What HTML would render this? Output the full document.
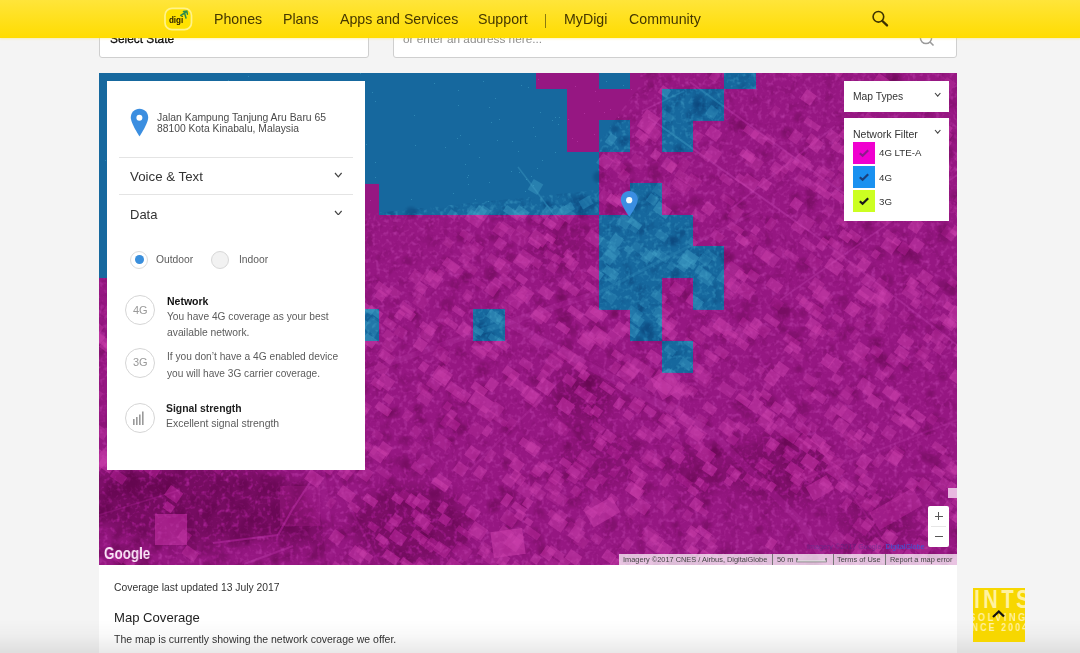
<!DOCTYPE html>
<html><head><meta charset="utf-8"><style>
*{margin:0;padding:0;box-sizing:border-box}
html,body{width:1080px;height:653px;overflow:hidden;background:#f4f4f4;font-family:"Liberation Sans",sans-serif;position:relative}
.abs{position:absolute}
.hdr{position:absolute;left:0;top:0;width:1080px;height:37.5px;background:linear-gradient(#ffe53a,#ffdc00);z-index:5;box-shadow:0 1px 2px rgba(255,230,60,0.35)}
.inp{position:absolute;top:20px;height:37.5px;background:#fff;border:1px solid #cfcfcf;border-radius:3px}
.map{position:absolute;left:99px;top:73px;width:858px;height:492px;overflow:hidden;background:#921883}
.panel{position:absolute;left:107px;top:81px;width:258px;height:389px;background:#fff;z-index:3}
.t{position:absolute;white-space:nowrap;line-height:1;will-change:transform}
.content{position:absolute;left:99px;top:565px;width:858px;height:88px;background:#fff}
</style></head><body>
<div class="inp" style="left:99px;width:270px"></div>
<div class="inp" style="left:393px;width:564px"></div>
<div class="t" style="left:110px;top:33.65px;font-size:11.9px;color:#000;font-weight:normal;-webkit-text-stroke:0.25px #000">Select State</div>
<div class="t" style="left:403px;top:33.50px;font-size:11.8px;color:#8c8c8c;font-weight:normal;">or enter an address here...</div>
<svg class="abs" style="left:916px;top:28px" width="22" height="22"><circle cx="10" cy="10" r="5.6" fill="none" stroke="#9a9a9a" stroke-width="1.5"/><line x1="14" y1="14" x2="17.5" y2="17.5" stroke="#9a9a9a" stroke-width="1.6"/></svg>
<div class="hdr"><div class="t" style="left:214.4px;top:12.00px;font-size:14.2px;color:#453700;font-weight:normal;">Phones</div>
<div class="t" style="left:283px;top:12.00px;font-size:14.2px;color:#453700;font-weight:normal;">Plans</div>
<div class="t" style="left:339.6px;top:12.00px;font-size:14.2px;color:#453700;font-weight:normal;">Apps and Services</div>
<div class="t" style="left:478.1px;top:12.00px;font-size:14.2px;color:#453700;font-weight:normal;">Support</div>
<div class="t" style="left:564.4px;top:12.00px;font-size:14.2px;color:#453700;font-weight:normal;">MyDigi</div>
<div class="t" style="left:628.6px;top:12.00px;font-size:14.2px;color:#453700;font-weight:normal;">Community</div>
<div class="abs" style="left:545.2px;top:13.5px;width:1px;height:14px;background:#8a7a10"></div>
<svg class="abs" style="left:868px;top:6px" width="24" height="24"><circle cx="10.4" cy="10.8" r="5.3" fill="none" stroke="#3d3300" stroke-width="1.6"/><line x1="14.4" y1="15" x2="19" y2="19.4" stroke="#3d3300" stroke-width="2.4" stroke-linecap="round"/></svg>
<svg class="abs" style="left:160px;top:3px" width="36" height="32">
<rect x="5" y="5.4" width="26.5" height="21.3" rx="7" fill="#ffe200" stroke="#fff38a" stroke-width="1.7"/>
<text x="8.9" y="20.5" font-family="Liberation Sans" font-weight="bold" font-size="8.8" fill="#2a2000" transform="translate(8.9 0) scale(0.92 1) translate(-8.9 0)">digi</text>
<path d="M20.8 12.5 L27 8.4 M23.5 8.6 L26.8 8.2 L27.4 11.2 M24.6 10.2 L26 15" stroke="#2f8c4c" stroke-width="1.5" fill="none" stroke-linecap="round"/>
</svg></div>
<div class="map"><svg class="abs" style="left:0;top:0" width="858" height="492" shape-rendering="crispEdges"><g fill="#16689e"><rect x="-2.7" y="-15.7" width="439.6" height="32.0"/>
<rect x="499.7" y="-15.7" width="31.4" height="32.0"/>
<rect x="625.3" y="-15.7" width="31.4" height="32.0"/>
<rect x="-2.7" y="15.8" width="471.0" height="32.0"/>
<rect x="562.5" y="15.8" width="62.8" height="32.0"/>
<rect x="-2.7" y="47.3" width="471.0" height="32.0"/>
<rect x="499.7" y="47.3" width="31.4" height="32.0"/>
<rect x="562.5" y="47.3" width="31.4" height="32.0"/>
<rect x="-2.7" y="78.8" width="502.4" height="32.0"/>
<rect x="-2.7" y="110.3" width="251.2" height="32.0"/>
<rect x="279.9" y="110.3" width="219.8" height="32.0"/>
<rect x="531.1" y="110.3" width="31.4" height="32.0"/>
<rect x="-2.7" y="141.8" width="251.2" height="32.0"/>
<rect x="499.7" y="141.8" width="94.2" height="32.0"/>
<rect x="-2.7" y="173.3" width="251.2" height="32.0"/>
<rect x="499.7" y="173.3" width="125.6" height="32.0"/>
<rect x="499.7" y="204.8" width="62.8" height="32.0"/>
<rect x="593.9" y="204.8" width="31.4" height="32.0"/>
<rect x="248.5" y="236.3" width="31.4" height="32.0"/>
<rect x="374.1" y="236.3" width="31.4" height="32.0"/>
<rect x="531.1" y="236.3" width="31.4" height="32.0"/>
<rect x="562.5" y="267.8" width="31.4" height="32.0"/></g></svg>
<svg class="abs" style="left:0;top:0;mix-blend-mode:soft-light" width="858" height="492"><defs><filter id="b1" x="-5%" y="-5%" width="110%" height="110%"><feGaussianBlur stdDeviation="1.6"/></filter><filter id="b3" x="-20%" y="-20%" width="140%" height="140%"><feGaussianBlur stdDeviation="8"/></filter><filter id="b2" x="-5%" y="-5%" width="110%" height="110%"><feGaussianBlur stdDeviation="0.6"/></filter><filter id="tl" x="0" y="0" width="100%" height="100%"><feTurbulence type="fractalNoise" baseFrequency="0.22" numOctaves="2" seed="4"/><feColorMatrix type="matrix" values="0 0 0 0 1  0 0 0 0 1  0 0 0 0 1  1.5 0 0 0 -0.75"/></filter><filter id="td" x="0" y="0" width="100%" height="100%"><feTurbulence type="fractalNoise" baseFrequency="0.08" numOctaves="3" seed="9"/><feColorMatrix type="matrix" values="0 0 0 0 0  0 0 0 0 0  0 0 0 0 0  -0.8 0 0 0 0.4"/></filter><clipPath id="land"><path d="M-10 -10 H868 V502 H-10 Z M-9 -23 L541 -23 L541 12 L501 67 L498 117 L401 127 L266 141 L266 205 L-9 205 Z" clip-rule="evenodd"/></clipPath></defs><g fill="#000" filter="url(#b3)"><ellipse cx="483" cy="323" rx="35" ry="28" fill-opacity="0.4"/><ellipse cx="683" cy="397" rx="55" ry="35" fill-opacity="0.4"/><ellipse cx="101" cy="432" rx="110" ry="40" fill-opacity="0.55"/><ellipse cx="201" cy="457" rx="30" ry="18" fill-opacity="0.45"/><ellipse cx="31" cy="407" rx="40" ry="15" fill-opacity="0.4"/><ellipse cx="311" cy="452" rx="60" ry="40" fill-opacity="0.45"/><ellipse cx="501" cy="387" rx="40" ry="30" fill-opacity="0.25"/><ellipse cx="781" cy="447" rx="40" ry="30" fill-opacity="0.3"/><ellipse cx="461" cy="172" rx="30" ry="20" fill-opacity="0.25"/><ellipse cx="601" cy="397" rx="30" ry="25" fill-opacity="0.3"/></g><g clip-path="url(#land)"><rect width="858" height="492" filter="url(#td)"/><rect width="858" height="492" filter="url(#tl)"/></g><g fill="#000" fill-opacity="0.3" filter="url(#b1)"><circle cx="552" cy="0" r="6"/><circle cx="612" cy="0" r="5"/><circle cx="792" cy="4" r="7"/><circle cx="780" cy="8" r="4"/><circle cx="796" cy="8" r="7"/><circle cx="552" cy="12" r="4"/><circle cx="600" cy="28" r="7"/><circle cx="616" cy="32" r="6"/><circle cx="568" cy="36" r="4"/><circle cx="600" cy="36" r="7"/><circle cx="760" cy="36" r="4"/><circle cx="700" cy="44" r="5"/><circle cx="636" cy="52" r="7"/><circle cx="644" cy="52" r="6"/><circle cx="516" cy="56" r="4"/><circle cx="816" cy="56" r="4"/><circle cx="840" cy="56" r="5"/><circle cx="556" cy="60" r="3"/><circle cx="688" cy="60" r="6"/><circle cx="828" cy="60" r="6"/><circle cx="852" cy="64" r="5"/><circle cx="524" cy="68" r="5"/><circle cx="748" cy="68" r="4"/><circle cx="816" cy="72" r="3"/><circle cx="580" cy="76" r="5"/><circle cx="816" cy="76" r="5"/><circle cx="704" cy="80" r="3"/><circle cx="848" cy="80" r="7"/><circle cx="580" cy="92" r="3"/><circle cx="528" cy="96" r="6"/><circle cx="524" cy="100" r="4"/><circle cx="556" cy="100" r="7"/><circle cx="684" cy="100" r="4"/><circle cx="760" cy="100" r="6"/><circle cx="500" cy="104" r="6"/><circle cx="652" cy="104" r="4"/><circle cx="776" cy="104" r="7"/><circle cx="824" cy="104" r="4"/><circle cx="836" cy="112" r="7"/><circle cx="712" cy="120" r="5"/><circle cx="516" cy="124" r="4"/><circle cx="552" cy="124" r="5"/><circle cx="696" cy="124" r="5"/><circle cx="792" cy="124" r="5"/><circle cx="860" cy="124" r="6"/><circle cx="476" cy="128" r="5"/><circle cx="484" cy="128" r="6"/><circle cx="548" cy="128" r="5"/><circle cx="596" cy="128" r="5"/><circle cx="632" cy="128" r="4"/><circle cx="712" cy="128" r="6"/><circle cx="448" cy="132" r="4"/><circle cx="492" cy="132" r="5"/><circle cx="536" cy="132" r="6"/><circle cx="640" cy="132" r="4"/><circle cx="644" cy="132" r="4"/><circle cx="748" cy="132" r="4"/><circle cx="780" cy="132" r="3"/><circle cx="480" cy="136" r="4"/><circle cx="512" cy="136" r="7"/><circle cx="524" cy="136" r="4"/><circle cx="576" cy="136" r="5"/><circle cx="712" cy="136" r="3"/><circle cx="312" cy="140" r="6"/><circle cx="484" cy="140" r="6"/><circle cx="812" cy="140" r="4"/><circle cx="628" cy="144" r="4"/><circle cx="648" cy="144" r="4"/><circle cx="792" cy="144" r="4"/><circle cx="808" cy="144" r="5"/><circle cx="840" cy="144" r="3"/><circle cx="432" cy="148" r="4"/><circle cx="464" cy="148" r="6"/><circle cx="668" cy="148" r="4"/><circle cx="464" cy="152" r="4"/><circle cx="768" cy="152" r="5"/><circle cx="400" cy="156" r="5"/><circle cx="488" cy="156" r="4"/><circle cx="844" cy="156" r="6"/><circle cx="584" cy="160" r="3"/><circle cx="644" cy="160" r="5"/><circle cx="796" cy="160" r="4"/><circle cx="360" cy="164" r="5"/><circle cx="396" cy="164" r="5"/><circle cx="752" cy="164" r="6"/><circle cx="844" cy="164" r="7"/><circle cx="572" cy="168" r="5"/><circle cx="576" cy="168" r="5"/><circle cx="668" cy="168" r="5"/><circle cx="728" cy="168" r="6"/><circle cx="760" cy="168" r="4"/><circle cx="412" cy="172" r="3"/><circle cx="456" cy="172" r="3"/><circle cx="756" cy="172" r="4"/><circle cx="444" cy="176" r="5"/><circle cx="796" cy="176" r="6"/><circle cx="804" cy="176" r="7"/><circle cx="780" cy="180" r="7"/><circle cx="808" cy="180" r="7"/><circle cx="412" cy="184" r="5"/><circle cx="460" cy="184" r="4"/><circle cx="608" cy="184" r="6"/><circle cx="628" cy="184" r="7"/><circle cx="816" cy="184" r="7"/><circle cx="308" cy="188" r="5"/><circle cx="348" cy="188" r="4"/><circle cx="804" cy="188" r="3"/><circle cx="664" cy="192" r="3"/><circle cx="704" cy="192" r="7"/><circle cx="464" cy="196" r="5"/><circle cx="648" cy="196" r="7"/><circle cx="336" cy="200" r="5"/><circle cx="392" cy="200" r="7"/><circle cx="576" cy="200" r="5"/><circle cx="656" cy="200" r="5"/><circle cx="368" cy="204" r="6"/><circle cx="96" cy="208" r="3"/><circle cx="168" cy="208" r="4"/><circle cx="532" cy="208" r="4"/><circle cx="788" cy="208" r="7"/><circle cx="820" cy="208" r="3"/><circle cx="356" cy="212" r="6"/><circle cx="408" cy="212" r="4"/><circle cx="572" cy="212" r="3"/><circle cx="576" cy="212" r="3"/><circle cx="844" cy="212" r="6"/><circle cx="856" cy="212" r="3"/><circle cx="88" cy="216" r="7"/><circle cx="200" cy="216" r="4"/><circle cx="852" cy="216" r="7"/><circle cx="64" cy="220" r="5"/><circle cx="176" cy="220" r="3"/><circle cx="192" cy="220" r="5"/><circle cx="240" cy="220" r="5"/><circle cx="396" cy="220" r="6"/><circle cx="464" cy="220" r="6"/><circle cx="588" cy="220" r="5"/><circle cx="24" cy="224" r="7"/><circle cx="460" cy="224" r="4"/><circle cx="480" cy="224" r="4"/><circle cx="584" cy="224" r="6"/><circle cx="128" cy="228" r="4"/><circle cx="184" cy="228" r="4"/><circle cx="260" cy="228" r="5"/><circle cx="440" cy="228" r="5"/><circle cx="464" cy="228" r="5"/><circle cx="744" cy="228" r="6"/><circle cx="16" cy="232" r="4"/><circle cx="348" cy="232" r="7"/><circle cx="496" cy="232" r="3"/><circle cx="568" cy="232" r="6"/><circle cx="648" cy="232" r="6"/><circle cx="676" cy="232" r="5"/><circle cx="140" cy="236" r="6"/><circle cx="460" cy="236" r="5"/><circle cx="540" cy="236" r="4"/><circle cx="684" cy="236" r="7"/><circle cx="720" cy="236" r="5"/><circle cx="304" cy="240" r="3"/><circle cx="516" cy="240" r="4"/><circle cx="684" cy="240" r="7"/><circle cx="704" cy="240" r="4"/><circle cx="212" cy="244" r="6"/><circle cx="292" cy="244" r="4"/><circle cx="316" cy="244" r="5"/><circle cx="468" cy="244" r="6"/><circle cx="644" cy="244" r="7"/><circle cx="812" cy="244" r="4"/><circle cx="20" cy="248" r="3"/><circle cx="44" cy="248" r="5"/><circle cx="460" cy="248" r="4"/><circle cx="40" cy="252" r="7"/><circle cx="92" cy="252" r="3"/><circle cx="496" cy="252" r="6"/><circle cx="64" cy="256" r="5"/><circle cx="92" cy="256" r="4"/><circle cx="100" cy="256" r="4"/><circle cx="384" cy="256" r="6"/><circle cx="472" cy="256" r="7"/><circle cx="504" cy="256" r="4"/><circle cx="548" cy="256" r="7"/><circle cx="684" cy="256" r="4"/><circle cx="704" cy="256" r="3"/><circle cx="720" cy="256" r="4"/><circle cx="752" cy="256" r="4"/><circle cx="840" cy="256" r="6"/><circle cx="156" cy="260" r="6"/><circle cx="384" cy="260" r="4"/><circle cx="664" cy="260" r="5"/><circle cx="228" cy="264" r="4"/><circle cx="392" cy="264" r="5"/><circle cx="552" cy="264" r="5"/><circle cx="592" cy="264" r="4"/><circle cx="624" cy="264" r="4"/><circle cx="696" cy="264" r="7"/><circle cx="744" cy="264" r="4"/><circle cx="836" cy="264" r="3"/><circle cx="144" cy="268" r="4"/><circle cx="540" cy="268" r="5"/><circle cx="652" cy="268" r="5"/><circle cx="780" cy="268" r="4"/><circle cx="340" cy="272" r="5"/><circle cx="468" cy="272" r="7"/><circle cx="776" cy="272" r="5"/><circle cx="0" cy="276" r="7"/><circle cx="24" cy="276" r="6"/><circle cx="272" cy="276" r="3"/><circle cx="16" cy="280" r="7"/><circle cx="44" cy="280" r="3"/><circle cx="200" cy="280" r="5"/><circle cx="240" cy="280" r="6"/><circle cx="320" cy="280" r="4"/><circle cx="360" cy="280" r="4"/><circle cx="512" cy="280" r="6"/><circle cx="820" cy="280" r="5"/><circle cx="208" cy="284" r="4"/><circle cx="464" cy="284" r="6"/><circle cx="600" cy="284" r="3"/><circle cx="624" cy="284" r="4"/><circle cx="780" cy="284" r="7"/><circle cx="132" cy="288" r="5"/><circle cx="260" cy="288" r="6"/><circle cx="544" cy="288" r="3"/><circle cx="784" cy="288" r="7"/><circle cx="284" cy="292" r="4"/><circle cx="296" cy="292" r="4"/><circle cx="344" cy="292" r="4"/><circle cx="488" cy="292" r="5"/><circle cx="524" cy="292" r="6"/><circle cx="808" cy="292" r="6"/><circle cx="20" cy="296" r="7"/><circle cx="120" cy="296" r="4"/><circle cx="128" cy="296" r="3"/><circle cx="384" cy="296" r="7"/><circle cx="448" cy="296" r="4"/><circle cx="700" cy="296" r="4"/><circle cx="44" cy="300" r="3"/><circle cx="416" cy="300" r="4"/><circle cx="556" cy="300" r="5"/><circle cx="36" cy="304" r="4"/><circle cx="408" cy="304" r="4"/><circle cx="764" cy="304" r="3"/><circle cx="792" cy="304" r="4"/><circle cx="844" cy="304" r="4"/><circle cx="164" cy="308" r="4"/><circle cx="196" cy="308" r="7"/><circle cx="436" cy="308" r="5"/><circle cx="488" cy="308" r="6"/><circle cx="492" cy="308" r="6"/><circle cx="64" cy="312" r="4"/><circle cx="72" cy="312" r="4"/><circle cx="184" cy="312" r="5"/><circle cx="276" cy="312" r="3"/><circle cx="476" cy="312" r="5"/><circle cx="76" cy="316" r="4"/><circle cx="264" cy="316" r="6"/><circle cx="328" cy="316" r="6"/><circle cx="384" cy="316" r="6"/><circle cx="488" cy="316" r="6"/><circle cx="712" cy="316" r="3"/><circle cx="236" cy="320" r="4"/><circle cx="352" cy="320" r="5"/><circle cx="736" cy="320" r="4"/><circle cx="756" cy="320" r="4"/><circle cx="832" cy="320" r="4"/><circle cx="120" cy="324" r="5"/><circle cx="460" cy="324" r="3"/><circle cx="552" cy="324" r="3"/><circle cx="568" cy="324" r="5"/><circle cx="664" cy="324" r="3"/><circle cx="776" cy="324" r="3"/><circle cx="96" cy="328" r="6"/><circle cx="364" cy="328" r="6"/><circle cx="528" cy="328" r="6"/><circle cx="672" cy="328" r="6"/><circle cx="348" cy="332" r="5"/><circle cx="540" cy="332" r="6"/><circle cx="640" cy="332" r="6"/><circle cx="672" cy="332" r="3"/><circle cx="104" cy="336" r="7"/><circle cx="320" cy="336" r="5"/><circle cx="356" cy="336" r="3"/><circle cx="704" cy="336" r="7"/><circle cx="288" cy="340" r="5"/><circle cx="296" cy="340" r="5"/><circle cx="648" cy="340" r="6"/><circle cx="180" cy="344" r="4"/><circle cx="560" cy="344" r="7"/><circle cx="836" cy="344" r="5"/><circle cx="76" cy="348" r="7"/><circle cx="184" cy="348" r="4"/><circle cx="244" cy="348" r="5"/><circle cx="324" cy="348" r="4"/><circle cx="344" cy="348" r="7"/><circle cx="356" cy="348" r="6"/><circle cx="656" cy="348" r="4"/><circle cx="252" cy="352" r="4"/><circle cx="288" cy="352" r="3"/><circle cx="608" cy="352" r="5"/><circle cx="360" cy="356" r="7"/><circle cx="408" cy="356" r="6"/><circle cx="480" cy="356" r="6"/><circle cx="828" cy="356" r="6"/><circle cx="192" cy="360" r="4"/><circle cx="252" cy="360" r="5"/><circle cx="260" cy="360" r="5"/><circle cx="704" cy="360" r="4"/><circle cx="112" cy="364" r="6"/><circle cx="288" cy="364" r="5"/><circle cx="480" cy="364" r="4"/><circle cx="636" cy="364" r="6"/><circle cx="56" cy="368" r="5"/><circle cx="164" cy="368" r="7"/><circle cx="308" cy="368" r="5"/><circle cx="352" cy="368" r="4"/><circle cx="424" cy="368" r="4"/><circle cx="684" cy="368" r="4"/><circle cx="688" cy="368" r="6"/><circle cx="692" cy="368" r="7"/><circle cx="712" cy="368" r="4"/><circle cx="44" cy="372" r="6"/><circle cx="468" cy="372" r="4"/><circle cx="536" cy="372" r="6"/><circle cx="588" cy="372" r="5"/><circle cx="184" cy="376" r="7"/><circle cx="220" cy="376" r="4"/><circle cx="284" cy="376" r="5"/><circle cx="432" cy="376" r="4"/><circle cx="576" cy="376" r="3"/><circle cx="616" cy="376" r="7"/><circle cx="636" cy="376" r="6"/><circle cx="684" cy="376" r="5"/><circle cx="216" cy="380" r="4"/><circle cx="616" cy="380" r="6"/><circle cx="800" cy="380" r="6"/><circle cx="284" cy="384" r="5"/><circle cx="376" cy="384" r="4"/><circle cx="828" cy="384" r="6"/><circle cx="44" cy="388" r="6"/><circle cx="232" cy="388" r="3"/><circle cx="260" cy="388" r="6"/><circle cx="304" cy="388" r="7"/><circle cx="548" cy="388" r="3"/><circle cx="612" cy="388" r="3"/><circle cx="688" cy="388" r="4"/><circle cx="836" cy="388" r="6"/><circle cx="-4" cy="392" r="3"/><circle cx="168" cy="392" r="6"/><circle cx="308" cy="392" r="5"/><circle cx="408" cy="392" r="5"/><circle cx="476" cy="392" r="5"/><circle cx="552" cy="392" r="5"/><circle cx="568" cy="392" r="7"/><circle cx="668" cy="392" r="4"/><circle cx="760" cy="392" r="5"/><circle cx="80" cy="396" r="6"/><circle cx="260" cy="396" r="4"/><circle cx="328" cy="396" r="4"/><circle cx="360" cy="396" r="5"/><circle cx="600" cy="396" r="5"/><circle cx="32" cy="400" r="5"/><circle cx="84" cy="400" r="3"/><circle cx="228" cy="400" r="6"/><circle cx="316" cy="400" r="4"/><circle cx="0" cy="404" r="4"/><circle cx="20" cy="404" r="5"/><circle cx="64" cy="404" r="3"/><circle cx="164" cy="404" r="3"/><circle cx="216" cy="404" r="4"/><circle cx="248" cy="404" r="7"/><circle cx="436" cy="404" r="6"/><circle cx="452" cy="404" r="7"/><circle cx="468" cy="404" r="6"/><circle cx="592" cy="404" r="6"/><circle cx="616" cy="404" r="7"/><circle cx="692" cy="404" r="6"/><circle cx="760" cy="404" r="5"/><circle cx="32" cy="408" r="7"/><circle cx="36" cy="408" r="6"/><circle cx="72" cy="408" r="6"/><circle cx="120" cy="408" r="5"/><circle cx="136" cy="408" r="3"/><circle cx="168" cy="408" r="7"/><circle cx="180" cy="408" r="6"/><circle cx="268" cy="408" r="4"/><circle cx="292" cy="408" r="5"/><circle cx="592" cy="408" r="4"/><circle cx="-4" cy="412" r="4"/><circle cx="12" cy="412" r="5"/><circle cx="64" cy="412" r="5"/><circle cx="72" cy="412" r="4"/><circle cx="80" cy="412" r="3"/><circle cx="144" cy="412" r="6"/><circle cx="204" cy="412" r="6"/><circle cx="552" cy="412" r="3"/><circle cx="676" cy="412" r="5"/><circle cx="820" cy="412" r="6"/><circle cx="28" cy="416" r="4"/><circle cx="56" cy="416" r="7"/><circle cx="68" cy="416" r="5"/><circle cx="116" cy="416" r="5"/><circle cx="128" cy="416" r="6"/><circle cx="164" cy="416" r="3"/><circle cx="176" cy="416" r="6"/><circle cx="196" cy="416" r="6"/><circle cx="200" cy="416" r="6"/><circle cx="404" cy="416" r="4"/><circle cx="544" cy="416" r="7"/><circle cx="16" cy="420" r="6"/><circle cx="36" cy="420" r="7"/><circle cx="68" cy="420" r="6"/><circle cx="336" cy="420" r="6"/><circle cx="-4" cy="424" r="7"/><circle cx="8" cy="424" r="5"/><circle cx="160" cy="424" r="3"/><circle cx="200" cy="424" r="6"/><circle cx="284" cy="424" r="6"/><circle cx="408" cy="424" r="7"/><circle cx="480" cy="424" r="4"/><circle cx="44" cy="428" r="5"/><circle cx="80" cy="428" r="4"/><circle cx="96" cy="428" r="5"/><circle cx="108" cy="428" r="4"/><circle cx="132" cy="428" r="5"/><circle cx="316" cy="428" r="7"/><circle cx="412" cy="428" r="4"/><circle cx="472" cy="428" r="5"/><circle cx="608" cy="428" r="5"/><circle cx="116" cy="432" r="4"/><circle cx="144" cy="432" r="6"/><circle cx="176" cy="432" r="4"/><circle cx="232" cy="432" r="3"/><circle cx="304" cy="432" r="4"/><circle cx="336" cy="432" r="5"/><circle cx="396" cy="432" r="7"/><circle cx="424" cy="432" r="5"/><circle cx="604" cy="432" r="6"/><circle cx="804" cy="432" r="3"/><circle cx="4" cy="436" r="6"/><circle cx="8" cy="436" r="7"/><circle cx="28" cy="436" r="4"/><circle cx="112" cy="436" r="6"/><circle cx="136" cy="436" r="4"/><circle cx="212" cy="436" r="4"/><circle cx="576" cy="436" r="3"/><circle cx="0" cy="440" r="4"/><circle cx="80" cy="440" r="7"/><circle cx="176" cy="440" r="6"/><circle cx="352" cy="440" r="5"/><circle cx="440" cy="440" r="5"/><circle cx="548" cy="440" r="4"/><circle cx="720" cy="440" r="5"/><circle cx="108" cy="444" r="5"/><circle cx="128" cy="444" r="5"/><circle cx="156" cy="444" r="7"/><circle cx="372" cy="444" r="5"/><circle cx="804" cy="444" r="3"/><circle cx="0" cy="448" r="6"/><circle cx="72" cy="448" r="4"/><circle cx="88" cy="448" r="7"/><circle cx="188" cy="448" r="6"/><circle cx="208" cy="448" r="5"/><circle cx="260" cy="448" r="4"/><circle cx="412" cy="448" r="7"/><circle cx="148" cy="452" r="7"/><circle cx="224" cy="452" r="5"/><circle cx="356" cy="452" r="6"/><circle cx="472" cy="452" r="6"/><circle cx="512" cy="452" r="7"/><circle cx="576" cy="452" r="4"/><circle cx="608" cy="452" r="5"/><circle cx="788" cy="452" r="4"/><circle cx="124" cy="456" r="3"/><circle cx="164" cy="456" r="7"/><circle cx="180" cy="456" r="4"/><circle cx="192" cy="456" r="6"/><circle cx="208" cy="456" r="3"/><circle cx="256" cy="456" r="4"/><circle cx="408" cy="456" r="5"/><circle cx="660" cy="456" r="5"/><circle cx="20" cy="460" r="5"/><circle cx="44" cy="460" r="5"/><circle cx="80" cy="460" r="3"/><circle cx="92" cy="460" r="6"/><circle cx="140" cy="460" r="6"/><circle cx="204" cy="460" r="6"/><circle cx="244" cy="460" r="6"/><circle cx="324" cy="460" r="5"/><circle cx="436" cy="460" r="6"/><circle cx="580" cy="460" r="4"/><circle cx="836" cy="460" r="3"/><circle cx="856" cy="460" r="5"/><circle cx="864" cy="460" r="7"/><circle cx="-4" cy="464" r="5"/><circle cx="16" cy="464" r="4"/><circle cx="64" cy="464" r="6"/><circle cx="148" cy="464" r="7"/><circle cx="328" cy="464" r="6"/><circle cx="-8" cy="468" r="7"/><circle cx="40" cy="468" r="4"/><circle cx="136" cy="468" r="7"/><circle cx="148" cy="468" r="4"/><circle cx="324" cy="468" r="3"/><circle cx="364" cy="468" r="5"/><circle cx="440" cy="468" r="3"/><circle cx="864" cy="468" r="7"/><circle cx="16" cy="472" r="5"/><circle cx="36" cy="472" r="7"/><circle cx="60" cy="472" r="5"/><circle cx="92" cy="472" r="7"/><circle cx="184" cy="472" r="4"/><circle cx="228" cy="472" r="7"/><circle cx="16" cy="476" r="5"/><circle cx="24" cy="476" r="6"/><circle cx="56" cy="476" r="5"/><circle cx="108" cy="476" r="7"/><circle cx="408" cy="476" r="5"/><circle cx="444" cy="476" r="6"/><circle cx="748" cy="476" r="5"/><circle cx="0" cy="480" r="4"/><circle cx="4" cy="480" r="5"/><circle cx="24" cy="480" r="4"/><circle cx="28" cy="480" r="3"/><circle cx="88" cy="480" r="4"/><circle cx="220" cy="480" r="7"/><circle cx="300" cy="480" r="4"/><circle cx="444" cy="480" r="4"/><circle cx="624" cy="480" r="5"/><circle cx="852" cy="480" r="3"/><circle cx="28" cy="484" r="3"/><circle cx="32" cy="484" r="6"/><circle cx="48" cy="484" r="5"/><circle cx="120" cy="484" r="7"/><circle cx="176" cy="484" r="6"/><circle cx="188" cy="484" r="5"/><circle cx="212" cy="484" r="5"/><circle cx="456" cy="484" r="4"/><circle cx="600" cy="484" r="7"/><circle cx="660" cy="484" r="6"/><circle cx="832" cy="484" r="6"/><circle cx="20" cy="488" r="6"/><circle cx="24" cy="488" r="5"/><circle cx="44" cy="488" r="7"/><circle cx="176" cy="488" r="3"/><circle cx="312" cy="488" r="4"/><circle cx="712" cy="488" r="7"/><circle cx="736" cy="488" r="4"/><circle cx="828" cy="488" r="4"/><circle cx="24" cy="492" r="4"/><circle cx="108" cy="492" r="5"/><circle cx="160" cy="492" r="5"/><circle cx="556" cy="492" r="3"/><circle cx="572" cy="492" r="6"/><circle cx="604" cy="492" r="5"/><circle cx="44" cy="496" r="6"/><circle cx="60" cy="496" r="3"/><circle cx="224" cy="496" r="5"/><circle cx="228" cy="496" r="5"/><circle cx="348" cy="496" r="3"/><circle cx="692" cy="496" r="3"/><circle cx="764" cy="496" r="3"/><circle cx="848" cy="496" r="7"/></g><g fill="#fff" fill-opacity="0.5"><rect x="57" y="-5" width="1" height="1"/><rect x="92" y="-7" width="1" height="1"/><rect x="394" y="-6" width="1" height="1"/><rect x="415" y="-6" width="1" height="1"/><rect x="371" y="-4" width="1" height="1"/><rect x="465" y="-3" width="1" height="1"/><rect x="477" y="-3" width="1" height="1"/><rect x="483" y="-2" width="1" height="1"/><rect x="487" y="-2" width="1" height="1"/><rect x="149" y="3" width="1" height="1"/><rect x="261" y="0" width="1" height="1"/><rect x="129" y="7" width="1" height="1"/><rect x="439" y="6" width="1" height="1"/><rect x="335" y="10" width="1" height="1"/><rect x="384" y="8" width="1" height="1"/><rect x="507" y="8" width="1" height="1"/><rect x="8" y="13" width="1" height="1"/><rect x="422" y="12" width="1" height="1"/><rect x="429" y="14" width="1" height="1"/><rect x="476" y="13" width="1" height="1"/><rect x="524" y="12" width="1" height="1"/><rect x="229" y="17" width="1" height="1"/><rect x="273" y="19" width="1" height="1"/><rect x="359" y="17" width="1" height="1"/><rect x="496" y="18" width="1" height="1"/><rect x="532" y="16" width="1" height="1"/><rect x="177" y="26" width="1" height="1"/><rect x="396" y="25" width="1" height="1"/><rect x="148" y="28" width="1" height="1"/><rect x="276" y="28" width="1" height="1"/><rect x="500" y="28" width="1" height="1"/><rect x="149" y="32" width="1" height="1"/><rect x="359" y="32" width="1" height="1"/><rect x="390" y="34" width="1" height="1"/><rect x="441" y="39" width="1" height="1"/><rect x="505" y="39" width="1" height="1"/><rect x="511" y="36" width="1" height="1"/><rect x="60" y="43" width="1" height="1"/><rect x="315" y="42" width="1" height="1"/><rect x="485" y="40" width="1" height="1"/><rect x="14" y="47" width="1" height="1"/><rect x="241" y="44" width="1" height="1"/><rect x="400" y="46" width="1" height="1"/><rect x="453" y="47" width="1" height="1"/><rect x="456" y="44" width="1" height="1"/><rect x="460" y="44" width="1" height="1"/><rect x="469" y="46" width="1" height="1"/><rect x="519" y="44" width="1" height="1"/><rect x="86" y="49" width="1" height="1"/><rect x="392" y="49" width="1" height="1"/><rect x="459" y="51" width="1" height="1"/><rect x="208" y="54" width="1" height="1"/><rect x="434" y="54" width="1" height="1"/><rect x="229" y="58" width="1" height="1"/><rect x="57" y="61" width="1" height="1"/><rect x="98" y="61" width="1" height="1"/><rect x="361" y="62" width="1" height="1"/><rect x="436" y="63" width="1" height="1"/><rect x="495" y="61" width="1" height="1"/><rect x="227" y="65" width="1" height="1"/><rect x="358" y="65" width="1" height="1"/><rect x="398" y="67" width="1" height="1"/><rect x="473" y="65" width="1" height="1"/><rect x="201" y="70" width="1" height="1"/><rect x="267" y="71" width="1" height="1"/><rect x="370" y="71" width="1" height="1"/><rect x="413" y="68" width="1" height="1"/><rect x="478" y="68" width="1" height="1"/><rect x="197" y="73" width="1" height="1"/><rect x="316" y="72" width="1" height="1"/><rect x="346" y="74" width="1" height="1"/><rect x="101" y="77" width="1" height="1"/><rect x="419" y="78" width="1" height="1"/><rect x="456" y="79" width="1" height="1"/><rect x="43" y="81" width="1" height="1"/><rect x="220" y="82" width="1" height="1"/><rect x="251" y="83" width="1" height="1"/><rect x="265" y="82" width="1" height="1"/><rect x="6" y="87" width="1" height="1"/><rect x="9" y="84" width="1" height="1"/><rect x="101" y="86" width="1" height="1"/><rect x="123" y="84" width="1" height="1"/><rect x="380" y="84" width="1" height="1"/><rect x="443" y="87" width="1" height="1"/><rect x="276" y="89" width="1" height="1"/><rect x="366" y="91" width="1" height="1"/><rect x="438" y="95" width="1" height="1"/><rect x="412" y="98" width="1" height="1"/><rect x="420" y="99" width="1" height="1"/><rect x="214" y="102" width="1" height="1"/><rect x="369" y="102" width="1" height="1"/><rect x="432" y="103" width="1" height="1"/><rect x="20" y="107" width="1" height="1"/><rect x="33" y="106" width="1" height="1"/><rect x="47" y="104" width="1" height="1"/><rect x="276" y="104" width="1" height="1"/><rect x="368" y="104" width="1" height="1"/><rect x="427" y="106" width="1" height="1"/><rect x="128" y="109" width="1" height="1"/><rect x="369" y="111" width="1" height="1"/><rect x="390" y="109" width="1" height="1"/><rect x="434" y="112" width="1" height="1"/><rect x="426" y="118" width="1" height="1"/><rect x="62" y="122" width="1" height="1"/><rect x="354" y="120" width="1" height="1"/><rect x="42" y="127" width="1" height="1"/><rect x="126" y="126" width="1" height="1"/><rect x="131" y="126" width="1" height="1"/><rect x="237" y="126" width="1" height="1"/><rect x="271" y="127" width="1" height="1"/><rect x="312" y="126" width="1" height="1"/><rect x="376" y="126" width="1" height="1"/><rect x="61" y="130" width="1" height="1"/><rect x="163" y="131" width="1" height="1"/><rect x="389" y="128" width="1" height="1"/><rect x="114" y="141" width="1" height="1"/><rect x="231" y="155" width="1" height="1"/><rect x="246" y="153" width="1" height="1"/><rect x="73" y="160" width="1" height="1"/><rect x="203" y="168" width="1" height="1"/><rect x="257" y="173" width="1" height="1"/><rect x="183" y="180" width="1" height="1"/><rect x="186" y="182" width="1" height="1"/><rect x="-8" y="191" width="1" height="1"/><rect x="188" y="189" width="1" height="1"/><rect x="87" y="192" width="1" height="1"/><rect x="94" y="194" width="1" height="1"/><rect x="246" y="196" width="1" height="1"/><rect x="203" y="202" width="1" height="1"/><rect x="212" y="202" width="1" height="1"/><rect x="232" y="201" width="1" height="1"/><rect x="83" y="206" width="1" height="1"/></g><g stroke="#fff" filter="url(#b2)"><line x1="549" y1="44" x2="713" y2="160" stroke-width="2" stroke-opacity="0.4"/><line x1="591" y1="9" x2="761" y2="132" stroke-width="2" stroke-opacity="0.35"/><line x1="632" y1="136" x2="736" y2="53" stroke-width="1.6" stroke-opacity="0.3"/><line x1="543" y1="38" x2="585" y2="18" stroke-width="1.5" stroke-opacity="0.3"/><line x1="681" y1="227" x2="858" y2="102" stroke-width="1.6" stroke-opacity="0.3"/><line x1="713" y1="160" x2="858" y2="272" stroke-width="1.8" stroke-opacity="0.3"/><line x1="266" y1="299" x2="371" y2="262" stroke-width="6" stroke-opacity="0.2"/><line x1="371" y1="262" x2="501" y2="219" stroke-width="6" stroke-opacity="0.2"/><line x1="501" y1="219" x2="661" y2="137" stroke-width="3" stroke-opacity="0.2"/><line x1="399" y1="244" x2="514" y2="306" stroke-width="8" stroke-opacity="0.22"/><line x1="514" y1="306" x2="612" y2="359" stroke-width="8" stroke-opacity="0.22"/><line x1="612" y1="359" x2="701" y2="448" stroke-width="7" stroke-opacity="0.2"/><line x1="701" y1="448" x2="728" y2="492" stroke-width="7" stroke-opacity="0.2"/><line x1="661" y1="287" x2="801" y2="492" stroke-width="1.8" stroke-opacity="0.2"/><line x1="212" y1="408" x2="193" y2="437" stroke-width="2" stroke-opacity="0.4"/><line x1="193" y1="437" x2="179" y2="462" stroke-width="2" stroke-opacity="0.4"/><line x1="179" y1="462" x2="114" y2="470" stroke-width="2" stroke-opacity="0.4"/><line x1="145" y1="491" x2="194" y2="473" stroke-width="2" stroke-opacity="0.35"/><line x1="0" y1="442" x2="81" y2="417" stroke-width="1.5" stroke-opacity="0.2"/><line x1="221" y1="397" x2="233" y2="492" stroke-width="10" stroke-opacity="0.12"/><line x1="701" y1="407" x2="858" y2="347" stroke-width="2" stroke-opacity="0.2"/><line x1="371" y1="397" x2="461" y2="307" stroke-width="2" stroke-opacity="0.2"/><line x1="231" y1="397" x2="281" y2="492" stroke-width="2" stroke-opacity="0.18"/><line x1="419" y1="94" x2="459" y2="147" stroke-width="1.4" stroke-opacity="0.35"/></g><g fill="#fff" filter="url(#b2)"><g id="bldg"><rect x="56" y="441" width="32" height="31" transform="rotate(0 72.0 456.5)" fill-opacity="0.45"/><rect x="181" y="413" width="40" height="40" transform="rotate(0 201.0 433.0)" fill-opacity="0.15"/><rect x="393" y="457" width="32" height="26" transform="rotate(-8 409.0 470.0)" fill-opacity="0.5"/><rect x="371" y="322" width="22" height="14" transform="rotate(35 382.0 329.0)" fill-opacity="0.45"/><rect x="709" y="407" width="24" height="16" transform="rotate(-30 721.0 415.0)" fill-opacity="0.4"/><rect x="431" y="108" width="11" height="12" transform="rotate(30 436.5 114.0)" fill-opacity="0.4"/><rect x="488" y="430" width="31" height="18" transform="rotate(-30 503.5 439.0)" fill-opacity="0.45"/><rect x="772" y="426" width="50" height="20" transform="rotate(-30 797.0 436.0)" fill-opacity="0.3"/><rect x="556" y="299" width="22" height="24" transform="rotate(-30 567.0 311.0)" fill-opacity="0.4"/><rect x="461" y="132" width="14" height="8" transform="rotate(-30 468.0 136.0)" fill-opacity="0.35"/><rect x="481" y="125" width="12" height="9" transform="rotate(-30 487.0 129.5)" fill-opacity="0.35"/><rect x="416" y="139" width="10" height="7" transform="rotate(-30 421.0 142.5)" fill-opacity="0.3"/><rect x="692" y="-8" width="11" height="8" transform="rotate(35 692 -8)" fill-opacity="0.29"/><rect x="740" y="-8" width="8" height="10" transform="rotate(35 740 -8)" fill-opacity="0.35"/><rect x="616" y="-4" width="8" height="11" transform="rotate(35 616 -4)" fill-opacity="0.29"/><rect x="780" y="0" width="13" height="11" transform="rotate(35 780 0)" fill-opacity="0.38"/><rect x="848" y="4" width="11" height="9" transform="rotate(35 848 4)" fill-opacity="0.23"/><rect x="564" y="12" width="10" height="9" transform="rotate(35 564 12)" fill-opacity="0.43"/><rect x="708" y="16" width="12" height="12" transform="rotate(35 708 16)" fill-opacity="0.44"/><rect x="764" y="20" width="10" height="9" transform="rotate(35 764 20)" fill-opacity="0.20"/><rect x="612" y="32" width="10" height="10" transform="rotate(35 612 32)" fill-opacity="0.31"/><rect x="676" y="32" width="7" height="11" transform="rotate(35 676 32)" fill-opacity="0.19"/><rect x="548" y="36" width="16" height="9" transform="rotate(35 548 36)" fill-opacity="0.43"/><rect x="564" y="36" width="14" height="7" transform="rotate(35 564 36)" fill-opacity="0.22"/><rect x="768" y="40" width="14" height="10" transform="rotate(35 768 40)" fill-opacity="0.27"/><rect x="544" y="44" width="15" height="11" transform="rotate(35 544 44)" fill-opacity="0.44"/><rect x="708" y="44" width="17" height="6" transform="rotate(35 708 44)" fill-opacity="0.37"/><rect x="552" y="48" width="14" height="13" transform="rotate(35 552 48)" fill-opacity="0.19"/><rect x="784" y="48" width="8" height="6" transform="rotate(35 784 48)" fill-opacity="0.25"/><rect x="844" y="48" width="12" height="13" transform="rotate(35 844 48)" fill-opacity="0.42"/><rect x="552" y="52" width="14" height="12" transform="rotate(35 552 52)" fill-opacity="0.26"/><rect x="612" y="52" width="14" height="11" transform="rotate(35 612 52)" fill-opacity="0.40"/><rect x="648" y="52" width="15" height="7" transform="rotate(35 648 52)" fill-opacity="0.40"/><rect x="748" y="52" width="10" height="9" transform="rotate(35 748 52)" fill-opacity="0.32"/><rect x="840" y="52" width="17" height="9" transform="rotate(35 840 52)" fill-opacity="0.34"/><rect x="540" y="56" width="12" height="8" transform="rotate(35 540 56)" fill-opacity="0.45"/><rect x="596" y="56" width="11" height="10" transform="rotate(35 596 56)" fill-opacity="0.27"/><rect x="656" y="56" width="16" height="9" transform="rotate(35 656 56)" fill-opacity="0.35"/><rect x="696" y="56" width="10" height="12" transform="rotate(35 696 56)" fill-opacity="0.34"/><rect x="732" y="56" width="13" height="10" transform="rotate(35 732 56)" fill-opacity="0.30"/><rect x="744" y="56" width="13" height="8" transform="rotate(35 744 56)" fill-opacity="0.42"/><rect x="752" y="56" width="11" height="7" transform="rotate(35 752 56)" fill-opacity="0.39"/><rect x="784" y="56" width="14" height="12" transform="rotate(35 784 56)" fill-opacity="0.44"/><rect x="800" y="56" width="14" height="12" transform="rotate(35 800 56)" fill-opacity="0.35"/><rect x="512" y="60" width="8" height="11" transform="rotate(35 512 60)" fill-opacity="0.41"/><rect x="544" y="60" width="8" height="11" transform="rotate(35 544 60)" fill-opacity="0.29"/><rect x="668" y="60" width="12" height="7" transform="rotate(35 668 60)" fill-opacity="0.28"/><rect x="712" y="60" width="10" height="10" transform="rotate(35 712 60)" fill-opacity="0.31"/><rect x="788" y="60" width="13" height="10" transform="rotate(35 788 60)" fill-opacity="0.36"/><rect x="840" y="60" width="16" height="7" transform="rotate(35 840 60)" fill-opacity="0.38"/><rect x="716" y="64" width="11" height="12" transform="rotate(35 716 64)" fill-opacity="0.44"/><rect x="736" y="68" width="10" height="8" transform="rotate(35 736 68)" fill-opacity="0.38"/><rect x="820" y="68" width="14" height="8" transform="rotate(35 820 68)" fill-opacity="0.43"/><rect x="612" y="72" width="14" height="13" transform="rotate(35 612 72)" fill-opacity="0.36"/><rect x="744" y="72" width="11" height="8" transform="rotate(35 744 72)" fill-opacity="0.34"/><rect x="764" y="72" width="17" height="13" transform="rotate(35 764 72)" fill-opacity="0.29"/><rect x="804" y="72" width="16" height="6" transform="rotate(35 804 72)" fill-opacity="0.25"/><rect x="512" y="76" width="14" height="9" transform="rotate(35 512 76)" fill-opacity="0.24"/><rect x="556" y="76" width="8" height="9" transform="rotate(35 556 76)" fill-opacity="0.43"/><rect x="604" y="76" width="12" height="8" transform="rotate(35 604 76)" fill-opacity="0.22"/><rect x="644" y="76" width="16" height="7" transform="rotate(35 644 76)" fill-opacity="0.44"/><rect x="648" y="76" width="10" height="9" transform="rotate(35 648 76)" fill-opacity="0.42"/><rect x="684" y="76" width="13" height="10" transform="rotate(35 684 76)" fill-opacity="0.29"/><rect x="784" y="76" width="14" height="9" transform="rotate(35 784 76)" fill-opacity="0.35"/><rect x="860" y="76" width="11" height="7" transform="rotate(35 860 76)" fill-opacity="0.30"/><rect x="504" y="80" width="13" height="12" transform="rotate(35 504 80)" fill-opacity="0.34"/><rect x="536" y="80" width="15" height="11" transform="rotate(35 536 80)" fill-opacity="0.18"/><rect x="652" y="80" width="16" height="12" transform="rotate(35 652 80)" fill-opacity="0.25"/><rect x="700" y="80" width="15" height="12" transform="rotate(35 700 80)" fill-opacity="0.39"/><rect x="860" y="80" width="14" height="8" transform="rotate(35 860 80)" fill-opacity="0.34"/><rect x="516" y="84" width="8" height="11" transform="rotate(35 516 84)" fill-opacity="0.26"/><rect x="568" y="84" width="13" height="11" transform="rotate(35 568 84)" fill-opacity="0.36"/><rect x="584" y="84" width="10" height="12" transform="rotate(35 584 84)" fill-opacity="0.21"/><rect x="692" y="84" width="10" height="12" transform="rotate(35 692 84)" fill-opacity="0.34"/><rect x="764" y="84" width="15" height="11" transform="rotate(35 764 84)" fill-opacity="0.39"/><rect x="780" y="84" width="14" height="10" transform="rotate(35 780 84)" fill-opacity="0.28"/><rect x="520" y="88" width="10" height="11" transform="rotate(35 520 88)" fill-opacity="0.20"/><rect x="572" y="88" width="8" height="10" transform="rotate(35 572 88)" fill-opacity="0.38"/><rect x="676" y="88" width="10" height="10" transform="rotate(35 676 88)" fill-opacity="0.34"/><rect x="708" y="88" width="9" height="6" transform="rotate(35 708 88)" fill-opacity="0.25"/><rect x="744" y="88" width="13" height="10" transform="rotate(35 744 88)" fill-opacity="0.34"/><rect x="748" y="88" width="9" height="8" transform="rotate(35 748 88)" fill-opacity="0.20"/><rect x="776" y="88" width="16" height="9" transform="rotate(35 776 88)" fill-opacity="0.19"/><rect x="844" y="88" width="11" height="9" transform="rotate(35 844 88)" fill-opacity="0.34"/><rect x="676" y="92" width="14" height="11" transform="rotate(35 676 92)" fill-opacity="0.19"/><rect x="684" y="92" width="8" height="6" transform="rotate(35 684 92)" fill-opacity="0.33"/><rect x="720" y="92" width="12" height="11" transform="rotate(35 720 92)" fill-opacity="0.29"/><rect x="724" y="92" width="15" height="7" transform="rotate(35 724 92)" fill-opacity="0.22"/><rect x="860" y="92" width="8" height="6" transform="rotate(35 860 92)" fill-opacity="0.38"/><rect x="524" y="96" width="9" height="10" transform="rotate(35 524 96)" fill-opacity="0.29"/><rect x="580" y="96" width="15" height="8" transform="rotate(35 580 96)" fill-opacity="0.25"/><rect x="808" y="96" width="16" height="7" transform="rotate(35 808 96)" fill-opacity="0.38"/><rect x="592" y="100" width="14" height="11" transform="rotate(35 592 100)" fill-opacity="0.22"/><rect x="624" y="100" width="13" height="7" transform="rotate(35 624 100)" fill-opacity="0.30"/><rect x="640" y="100" width="7" height="8" transform="rotate(35 640 100)" fill-opacity="0.36"/><rect x="648" y="100" width="16" height="12" transform="rotate(35 648 100)" fill-opacity="0.34"/><rect x="700" y="100" width="13" height="9" transform="rotate(35 700 100)" fill-opacity="0.24"/><rect x="740" y="100" width="8" height="13" transform="rotate(35 740 100)" fill-opacity="0.24"/><rect x="760" y="100" width="14" height="10" transform="rotate(35 760 100)" fill-opacity="0.22"/><rect x="768" y="100" width="10" height="9" transform="rotate(35 768 100)" fill-opacity="0.38"/><rect x="576" y="104" width="16" height="8" transform="rotate(35 576 104)" fill-opacity="0.23"/><rect x="580" y="104" width="16" height="12" transform="rotate(35 580 104)" fill-opacity="0.21"/><rect x="664" y="104" width="11" height="10" transform="rotate(35 664 104)" fill-opacity="0.41"/><rect x="708" y="104" width="16" height="8" transform="rotate(35 708 104)" fill-opacity="0.28"/><rect x="720" y="104" width="14" height="9" transform="rotate(35 720 104)" fill-opacity="0.32"/><rect x="760" y="104" width="16" height="9" transform="rotate(35 760 104)" fill-opacity="0.42"/><rect x="776" y="104" width="10" height="8" transform="rotate(35 776 104)" fill-opacity="0.26"/><rect x="560" y="108" width="15" height="12" transform="rotate(35 560 108)" fill-opacity="0.26"/><rect x="796" y="108" width="8" height="12" transform="rotate(35 796 108)" fill-opacity="0.37"/><rect x="720" y="112" width="16" height="7" transform="rotate(35 720 112)" fill-opacity="0.44"/><rect x="756" y="112" width="14" height="8" transform="rotate(35 756 112)" fill-opacity="0.31"/><rect x="504" y="116" width="11" height="12" transform="rotate(35 504 116)" fill-opacity="0.21"/><rect x="736" y="116" width="15" height="8" transform="rotate(35 736 116)" fill-opacity="0.42"/><rect x="512" y="120" width="13" height="9" transform="rotate(35 512 120)" fill-opacity="0.44"/><rect x="516" y="120" width="13" height="8" transform="rotate(35 516 120)" fill-opacity="0.31"/><rect x="520" y="120" width="17" height="10" transform="rotate(35 520 120)" fill-opacity="0.31"/><rect x="552" y="120" width="10" height="9" transform="rotate(35 552 120)" fill-opacity="0.37"/><rect x="624" y="120" width="15" height="6" transform="rotate(35 624 120)" fill-opacity="0.24"/><rect x="820" y="120" width="13" height="9" transform="rotate(35 820 120)" fill-opacity="0.28"/><rect x="860" y="120" width="9" height="9" transform="rotate(35 860 120)" fill-opacity="0.21"/><rect x="696" y="124" width="10" height="10" transform="rotate(35 696 124)" fill-opacity="0.42"/><rect x="828" y="124" width="9" height="9" transform="rotate(35 828 124)" fill-opacity="0.41"/><rect x="560" y="128" width="16" height="11" transform="rotate(35 560 128)" fill-opacity="0.44"/><rect x="608" y="128" width="11" height="11" transform="rotate(35 608 128)" fill-opacity="0.43"/><rect x="776" y="128" width="9" height="13" transform="rotate(35 776 128)" fill-opacity="0.26"/><rect x="848" y="128" width="8" height="9" transform="rotate(35 848 128)" fill-opacity="0.18"/><rect x="860" y="128" width="16" height="12" transform="rotate(35 860 128)" fill-opacity="0.18"/><rect x="372" y="132" width="8" height="8" transform="rotate(35 372 132)" fill-opacity="0.25"/><rect x="380" y="132" width="10" height="11" transform="rotate(35 380 132)" fill-opacity="0.43"/><rect x="384" y="132" width="10" height="13" transform="rotate(35 384 132)" fill-opacity="0.37"/><rect x="408" y="132" width="17" height="7" transform="rotate(35 408 132)" fill-opacity="0.43"/><rect x="420" y="132" width="13" height="9" transform="rotate(35 420 132)" fill-opacity="0.43"/><rect x="448" y="132" width="8" height="13" transform="rotate(35 448 132)" fill-opacity="0.32"/><rect x="456" y="132" width="11" height="7" transform="rotate(35 456 132)" fill-opacity="0.27"/><rect x="464" y="132" width="16" height="12" transform="rotate(35 464 132)" fill-opacity="0.30"/><rect x="636" y="132" width="11" height="13" transform="rotate(35 636 132)" fill-opacity="0.25"/><rect x="728" y="132" width="9" height="9" transform="rotate(35 728 132)" fill-opacity="0.26"/><rect x="792" y="132" width="11" height="12" transform="rotate(35 792 132)" fill-opacity="0.36"/><rect x="352" y="136" width="9" height="7" transform="rotate(35 352 136)" fill-opacity="0.31"/><rect x="372" y="136" width="17" height="12" transform="rotate(35 372 136)" fill-opacity="0.36"/><rect x="596" y="136" width="14" height="7" transform="rotate(35 596 136)" fill-opacity="0.29"/><rect x="784" y="136" width="13" height="12" transform="rotate(35 784 136)" fill-opacity="0.25"/><rect x="860" y="136" width="7" height="7" transform="rotate(35 860 136)" fill-opacity="0.29"/><rect x="436" y="140" width="10" height="7" transform="rotate(35 436 140)" fill-opacity="0.28"/><rect x="456" y="140" width="13" height="13" transform="rotate(35 456 140)" fill-opacity="0.29"/><rect x="524" y="140" width="12" height="12" transform="rotate(35 524 140)" fill-opacity="0.33"/><rect x="704" y="140" width="15" height="12" transform="rotate(35 704 140)" fill-opacity="0.28"/><rect x="744" y="140" width="8" height="10" transform="rotate(35 744 140)" fill-opacity="0.22"/><rect x="448" y="144" width="12" height="8" transform="rotate(35 448 144)" fill-opacity="0.42"/><rect x="532" y="144" width="14" height="6" transform="rotate(35 532 144)" fill-opacity="0.44"/><rect x="672" y="144" width="8" height="12" transform="rotate(35 672 144)" fill-opacity="0.26"/><rect x="740" y="144" width="11" height="6" transform="rotate(35 740 144)" fill-opacity="0.30"/><rect x="816" y="144" width="11" height="13" transform="rotate(35 816 144)" fill-opacity="0.41"/><rect x="400" y="148" width="12" height="12" transform="rotate(35 400 148)" fill-opacity="0.33"/><rect x="404" y="148" width="15" height="8" transform="rotate(35 404 148)" fill-opacity="0.32"/><rect x="536" y="148" width="8" height="10" transform="rotate(35 536 148)" fill-opacity="0.25"/><rect x="632" y="148" width="16" height="7" transform="rotate(35 632 148)" fill-opacity="0.34"/><rect x="696" y="148" width="13" height="8" transform="rotate(35 696 148)" fill-opacity="0.36"/><rect x="724" y="148" width="7" height="8" transform="rotate(35 724 148)" fill-opacity="0.26"/><rect x="420" y="152" width="14" height="6" transform="rotate(35 420 152)" fill-opacity="0.25"/><rect x="656" y="152" width="7" height="8" transform="rotate(35 656 152)" fill-opacity="0.42"/><rect x="848" y="152" width="13" height="11" transform="rotate(35 848 152)" fill-opacity="0.20"/><rect x="856" y="152" width="7" height="9" transform="rotate(35 856 152)" fill-opacity="0.41"/><rect x="364" y="156" width="13" height="7" transform="rotate(35 364 156)" fill-opacity="0.26"/><rect x="416" y="156" width="17" height="11" transform="rotate(35 416 156)" fill-opacity="0.19"/><rect x="436" y="156" width="17" height="11" transform="rotate(35 436 156)" fill-opacity="0.35"/><rect x="448" y="156" width="12" height="9" transform="rotate(35 448 156)" fill-opacity="0.18"/><rect x="492" y="156" width="16" height="12" transform="rotate(35 492 156)" fill-opacity="0.32"/><rect x="560" y="156" width="12" height="8" transform="rotate(35 560 156)" fill-opacity="0.30"/><rect x="616" y="156" width="12" height="9" transform="rotate(35 616 156)" fill-opacity="0.30"/><rect x="744" y="156" width="12" height="9" transform="rotate(35 744 156)" fill-opacity="0.43"/><rect x="752" y="156" width="13" height="8" transform="rotate(35 752 156)" fill-opacity="0.38"/><rect x="788" y="156" width="13" height="9" transform="rotate(35 788 156)" fill-opacity="0.27"/><rect x="852" y="156" width="8" height="10" transform="rotate(35 852 156)" fill-opacity="0.18"/><rect x="448" y="160" width="11" height="6" transform="rotate(35 448 160)" fill-opacity="0.44"/><rect x="516" y="160" width="11" height="9" transform="rotate(35 516 160)" fill-opacity="0.41"/><rect x="640" y="160" width="12" height="8" transform="rotate(35 640 160)" fill-opacity="0.42"/><rect x="652" y="160" width="10" height="11" transform="rotate(35 652 160)" fill-opacity="0.22"/><rect x="348" y="164" width="9" height="8" transform="rotate(35 348 164)" fill-opacity="0.25"/><rect x="400" y="164" width="10" height="10" transform="rotate(35 400 164)" fill-opacity="0.36"/><rect x="432" y="164" width="13" height="6" transform="rotate(35 432 164)" fill-opacity="0.43"/><rect x="504" y="164" width="13" height="8" transform="rotate(35 504 164)" fill-opacity="0.19"/><rect x="592" y="164" width="9" height="7" transform="rotate(35 592 164)" fill-opacity="0.31"/><rect x="644" y="164" width="9" height="7" transform="rotate(35 644 164)" fill-opacity="0.28"/><rect x="704" y="164" width="17" height="7" transform="rotate(35 704 164)" fill-opacity="0.32"/><rect x="724" y="164" width="8" height="12" transform="rotate(35 724 164)" fill-opacity="0.40"/><rect x="732" y="164" width="13" height="7" transform="rotate(35 732 164)" fill-opacity="0.33"/><rect x="788" y="164" width="14" height="12" transform="rotate(35 788 164)" fill-opacity="0.36"/><rect x="796" y="164" width="8" height="6" transform="rotate(35 796 164)" fill-opacity="0.42"/><rect x="816" y="164" width="12" height="12" transform="rotate(35 816 164)" fill-opacity="0.40"/><rect x="368" y="168" width="15" height="13" transform="rotate(35 368 168)" fill-opacity="0.19"/><rect x="376" y="168" width="11" height="10" transform="rotate(35 376 168)" fill-opacity="0.23"/><rect x="452" y="168" width="8" height="7" transform="rotate(35 452 168)" fill-opacity="0.23"/><rect x="512" y="168" width="9" height="7" transform="rotate(35 512 168)" fill-opacity="0.40"/><rect x="536" y="168" width="15" height="8" transform="rotate(35 536 168)" fill-opacity="0.22"/><rect x="736" y="168" width="15" height="7" transform="rotate(35 736 168)" fill-opacity="0.21"/><rect x="804" y="168" width="10" height="11" transform="rotate(35 804 168)" fill-opacity="0.26"/><rect x="512" y="172" width="12" height="11" transform="rotate(35 512 172)" fill-opacity="0.35"/><rect x="528" y="172" width="8" height="6" transform="rotate(35 528 172)" fill-opacity="0.39"/><rect x="660" y="172" width="17" height="10" transform="rotate(35 660 172)" fill-opacity="0.37"/><rect x="680" y="172" width="13" height="9" transform="rotate(35 680 172)" fill-opacity="0.20"/><rect x="864" y="172" width="16" height="7" transform="rotate(35 864 172)" fill-opacity="0.37"/><rect x="424" y="176" width="15" height="13" transform="rotate(35 424 176)" fill-opacity="0.32"/><rect x="448" y="176" width="15" height="7" transform="rotate(35 448 176)" fill-opacity="0.26"/><rect x="468" y="176" width="8" height="7" transform="rotate(35 468 176)" fill-opacity="0.36"/><rect x="508" y="176" width="12" height="12" transform="rotate(35 508 176)" fill-opacity="0.35"/><rect x="548" y="176" width="9" height="12" transform="rotate(35 548 176)" fill-opacity="0.35"/><rect x="552" y="176" width="8" height="11" transform="rotate(35 552 176)" fill-opacity="0.33"/><rect x="556" y="176" width="8" height="6" transform="rotate(35 556 176)" fill-opacity="0.36"/><rect x="560" y="176" width="14" height="8" transform="rotate(35 560 176)" fill-opacity="0.29"/><rect x="588" y="176" width="15" height="10" transform="rotate(35 588 176)" fill-opacity="0.44"/><rect x="608" y="176" width="13" height="6" transform="rotate(35 608 176)" fill-opacity="0.25"/><rect x="668" y="176" width="16" height="12" transform="rotate(35 668 176)" fill-opacity="0.32"/><rect x="688" y="176" width="15" height="6" transform="rotate(35 688 176)" fill-opacity="0.30"/><rect x="736" y="176" width="13" height="7" transform="rotate(35 736 176)" fill-opacity="0.33"/><rect x="760" y="176" width="12" height="8" transform="rotate(35 760 176)" fill-opacity="0.26"/><rect x="776" y="176" width="7" height="8" transform="rotate(35 776 176)" fill-opacity="0.36"/><rect x="864" y="176" width="9" height="12" transform="rotate(35 864 176)" fill-opacity="0.19"/><rect x="364" y="180" width="10" height="9" transform="rotate(35 364 180)" fill-opacity="0.30"/><rect x="392" y="180" width="12" height="9" transform="rotate(35 392 180)" fill-opacity="0.24"/><rect x="420" y="180" width="14" height="11" transform="rotate(35 420 180)" fill-opacity="0.40"/><rect x="456" y="180" width="10" height="7" transform="rotate(35 456 180)" fill-opacity="0.29"/><rect x="468" y="180" width="10" height="9" transform="rotate(35 468 180)" fill-opacity="0.36"/><rect x="584" y="180" width="13" height="11" transform="rotate(35 584 180)" fill-opacity="0.41"/><rect x="604" y="180" width="11" height="9" transform="rotate(35 604 180)" fill-opacity="0.32"/><rect x="712" y="180" width="15" height="12" transform="rotate(35 712 180)" fill-opacity="0.20"/><rect x="348" y="184" width="16" height="9" transform="rotate(35 348 184)" fill-opacity="0.40"/><rect x="400" y="184" width="9" height="10" transform="rotate(35 400 184)" fill-opacity="0.40"/><rect x="404" y="184" width="11" height="7" transform="rotate(35 404 184)" fill-opacity="0.22"/><rect x="436" y="184" width="10" height="8" transform="rotate(35 436 184)" fill-opacity="0.29"/><rect x="472" y="184" width="10" height="11" transform="rotate(35 472 184)" fill-opacity="0.40"/><rect x="584" y="184" width="10" height="12" transform="rotate(35 584 184)" fill-opacity="0.36"/><rect x="732" y="184" width="16" height="12" transform="rotate(35 732 184)" fill-opacity="0.44"/><rect x="764" y="184" width="10" height="12" transform="rotate(35 764 184)" fill-opacity="0.43"/><rect x="352" y="188" width="16" height="11" transform="rotate(35 352 188)" fill-opacity="0.23"/><rect x="368" y="188" width="14" height="8" transform="rotate(35 368 188)" fill-opacity="0.24"/><rect x="400" y="188" width="15" height="10" transform="rotate(35 400 188)" fill-opacity="0.22"/><rect x="452" y="188" width="10" height="9" transform="rotate(35 452 188)" fill-opacity="0.26"/><rect x="572" y="188" width="7" height="8" transform="rotate(35 572 188)" fill-opacity="0.25"/><rect x="592" y="188" width="7" height="6" transform="rotate(35 592 188)" fill-opacity="0.36"/><rect x="632" y="188" width="17" height="11" transform="rotate(35 632 188)" fill-opacity="0.26"/><rect x="752" y="188" width="15" height="10" transform="rotate(35 752 188)" fill-opacity="0.29"/><rect x="492" y="192" width="16" height="8" transform="rotate(35 492 192)" fill-opacity="0.45"/><rect x="508" y="192" width="15" height="8" transform="rotate(35 508 192)" fill-opacity="0.43"/><rect x="600" y="192" width="16" height="8" transform="rotate(35 600 192)" fill-opacity="0.36"/><rect x="856" y="192" width="14" height="6" transform="rotate(35 856 192)" fill-opacity="0.20"/><rect x="316" y="196" width="12" height="12" transform="rotate(35 316 196)" fill-opacity="0.27"/><rect x="328" y="196" width="9" height="13" transform="rotate(35 328 196)" fill-opacity="0.29"/><rect x="332" y="196" width="7" height="12" transform="rotate(35 332 196)" fill-opacity="0.36"/><rect x="340" y="196" width="7" height="12" transform="rotate(35 340 196)" fill-opacity="0.33"/><rect x="480" y="196" width="11" height="10" transform="rotate(35 480 196)" fill-opacity="0.20"/><rect x="604" y="196" width="15" height="11" transform="rotate(35 604 196)" fill-opacity="0.31"/><rect x="624" y="196" width="17" height="12" transform="rotate(35 624 196)" fill-opacity="0.28"/><rect x="640" y="196" width="12" height="8" transform="rotate(35 640 196)" fill-opacity="0.45"/><rect x="652" y="196" width="11" height="9" transform="rotate(35 652 196)" fill-opacity="0.32"/><rect x="824" y="196" width="13" height="12" transform="rotate(35 824 196)" fill-opacity="0.35"/><rect x="336" y="200" width="10" height="13" transform="rotate(35 336 200)" fill-opacity="0.39"/><rect x="404" y="200" width="15" height="9" transform="rotate(35 404 200)" fill-opacity="0.30"/><rect x="420" y="200" width="11" height="7" transform="rotate(35 420 200)" fill-opacity="0.42"/><rect x="512" y="200" width="9" height="8" transform="rotate(35 512 200)" fill-opacity="0.24"/><rect x="768" y="200" width="11" height="11" transform="rotate(35 768 200)" fill-opacity="0.36"/><rect x="812" y="200" width="9" height="9" transform="rotate(35 812 200)" fill-opacity="0.19"/><rect x="864" y="200" width="10" height="9" transform="rotate(35 864 200)" fill-opacity="0.44"/><rect x="376" y="204" width="14" height="6" transform="rotate(35 376 204)" fill-opacity="0.20"/><rect x="396" y="204" width="10" height="7" transform="rotate(35 396 204)" fill-opacity="0.33"/><rect x="464" y="204" width="10" height="10" transform="rotate(35 464 204)" fill-opacity="0.30"/><rect x="632" y="204" width="13" height="11" transform="rotate(35 632 204)" fill-opacity="0.31"/><rect x="672" y="204" width="15" height="10" transform="rotate(35 672 204)" fill-opacity="0.38"/><rect x="716" y="204" width="12" height="13" transform="rotate(35 716 204)" fill-opacity="0.31"/><rect x="780" y="204" width="11" height="11" transform="rotate(35 780 204)" fill-opacity="0.24"/><rect x="812" y="204" width="10" height="9" transform="rotate(35 812 204)" fill-opacity="0.45"/><rect x="852" y="204" width="9" height="7" transform="rotate(35 852 204)" fill-opacity="0.25"/><rect x="72" y="208" width="8" height="11" transform="rotate(35 72 208)" fill-opacity="0.21"/><rect x="96" y="208" width="10" height="13" transform="rotate(35 96 208)" fill-opacity="0.22"/><rect x="280" y="208" width="16" height="9" transform="rotate(35 280 208)" fill-opacity="0.36"/><rect x="320" y="208" width="11" height="9" transform="rotate(35 320 208)" fill-opacity="0.36"/><rect x="392" y="208" width="11" height="12" transform="rotate(35 392 208)" fill-opacity="0.34"/><rect x="468" y="208" width="16" height="8" transform="rotate(35 468 208)" fill-opacity="0.35"/><rect x="488" y="208" width="12" height="7" transform="rotate(35 488 208)" fill-opacity="0.42"/><rect x="576" y="208" width="13" height="11" transform="rotate(35 576 208)" fill-opacity="0.30"/><rect x="632" y="208" width="14" height="12" transform="rotate(35 632 208)" fill-opacity="0.21"/><rect x="644" y="208" width="16" height="13" transform="rotate(35 644 208)" fill-opacity="0.31"/><rect x="776" y="208" width="16" height="7" transform="rotate(35 776 208)" fill-opacity="0.23"/><rect x="832" y="208" width="11" height="10" transform="rotate(35 832 208)" fill-opacity="0.36"/><rect x="60" y="212" width="7" height="12" transform="rotate(35 60 212)" fill-opacity="0.42"/><rect x="72" y="212" width="9" height="8" transform="rotate(35 72 212)" fill-opacity="0.27"/><rect x="172" y="212" width="12" height="13" transform="rotate(35 172 212)" fill-opacity="0.33"/><rect x="292" y="212" width="13" height="9" transform="rotate(35 292 212)" fill-opacity="0.24"/><rect x="320" y="212" width="9" height="12" transform="rotate(35 320 212)" fill-opacity="0.20"/><rect x="420" y="212" width="11" height="10" transform="rotate(35 420 212)" fill-opacity="0.26"/><rect x="424" y="212" width="14" height="13" transform="rotate(35 424 212)" fill-opacity="0.42"/><rect x="444" y="212" width="14" height="9" transform="rotate(35 444 212)" fill-opacity="0.43"/><rect x="720" y="212" width="14" height="13" transform="rotate(35 720 212)" fill-opacity="0.41"/><rect x="764" y="212" width="16" height="10" transform="rotate(35 764 212)" fill-opacity="0.43"/><rect x="780" y="212" width="15" height="10" transform="rotate(35 780 212)" fill-opacity="0.20"/><rect x="808" y="212" width="15" height="10" transform="rotate(35 808 212)" fill-opacity="0.32"/><rect x="812" y="212" width="14" height="7" transform="rotate(35 812 212)" fill-opacity="0.29"/><rect x="64" y="216" width="7" height="13" transform="rotate(35 64 216)" fill-opacity="0.44"/><rect x="68" y="216" width="13" height="9" transform="rotate(35 68 216)" fill-opacity="0.37"/><rect x="92" y="216" width="16" height="8" transform="rotate(35 92 216)" fill-opacity="0.21"/><rect x="280" y="216" width="10" height="9" transform="rotate(35 280 216)" fill-opacity="0.42"/><rect x="368" y="216" width="8" height="9" transform="rotate(35 368 216)" fill-opacity="0.27"/><rect x="416" y="216" width="15" height="8" transform="rotate(35 416 216)" fill-opacity="0.25"/><rect x="508" y="216" width="13" height="10" transform="rotate(35 508 216)" fill-opacity="0.22"/><rect x="556" y="216" width="16" height="8" transform="rotate(35 556 216)" fill-opacity="0.32"/><rect x="628" y="216" width="9" height="8" transform="rotate(35 628 216)" fill-opacity="0.26"/><rect x="724" y="216" width="13" height="13" transform="rotate(35 724 216)" fill-opacity="0.25"/><rect x="760" y="216" width="13" height="9" transform="rotate(35 760 216)" fill-opacity="0.35"/><rect x="780" y="216" width="9" height="11" transform="rotate(35 780 216)" fill-opacity="0.29"/><rect x="784" y="216" width="13" height="11" transform="rotate(35 784 216)" fill-opacity="0.42"/><rect x="216" y="220" width="13" height="11" transform="rotate(35 216 220)" fill-opacity="0.33"/><rect x="224" y="220" width="11" height="11" transform="rotate(35 224 220)" fill-opacity="0.20"/><rect x="320" y="220" width="13" height="12" transform="rotate(35 320 220)" fill-opacity="0.19"/><rect x="368" y="220" width="7" height="7" transform="rotate(35 368 220)" fill-opacity="0.29"/><rect x="412" y="220" width="15" height="10" transform="rotate(35 412 220)" fill-opacity="0.29"/><rect x="592" y="220" width="16" height="10" transform="rotate(35 592 220)" fill-opacity="0.38"/><rect x="700" y="220" width="11" height="7" transform="rotate(35 700 220)" fill-opacity="0.30"/><rect x="776" y="220" width="12" height="10" transform="rotate(35 776 220)" fill-opacity="0.38"/><rect x="828" y="220" width="12" height="12" transform="rotate(35 828 220)" fill-opacity="0.21"/><rect x="844" y="220" width="13" height="12" transform="rotate(35 844 220)" fill-opacity="0.20"/><rect x="64" y="224" width="10" height="9" transform="rotate(35 64 224)" fill-opacity="0.33"/><rect x="136" y="224" width="11" height="6" transform="rotate(35 136 224)" fill-opacity="0.27"/><rect x="168" y="224" width="16" height="8" transform="rotate(35 168 224)" fill-opacity="0.35"/><rect x="216" y="224" width="13" height="12" transform="rotate(35 216 224)" fill-opacity="0.42"/><rect x="544" y="224" width="9" height="8" transform="rotate(35 544 224)" fill-opacity="0.24"/><rect x="676" y="224" width="11" height="9" transform="rotate(35 676 224)" fill-opacity="0.18"/><rect x="704" y="224" width="13" height="8" transform="rotate(35 704 224)" fill-opacity="0.43"/><rect x="768" y="224" width="9" height="7" transform="rotate(35 768 224)" fill-opacity="0.19"/><rect x="780" y="224" width="8" height="6" transform="rotate(35 780 224)" fill-opacity="0.18"/><rect x="816" y="224" width="8" height="9" transform="rotate(35 816 224)" fill-opacity="0.37"/><rect x="864" y="224" width="11" height="8" transform="rotate(35 864 224)" fill-opacity="0.44"/><rect x="124" y="228" width="12" height="11" transform="rotate(35 124 228)" fill-opacity="0.42"/><rect x="152" y="228" width="9" height="13" transform="rotate(35 152 228)" fill-opacity="0.37"/><rect x="220" y="228" width="14" height="9" transform="rotate(35 220 228)" fill-opacity="0.30"/><rect x="264" y="228" width="15" height="7" transform="rotate(35 264 228)" fill-opacity="0.45"/><rect x="304" y="228" width="15" height="7" transform="rotate(35 304 228)" fill-opacity="0.34"/><rect x="404" y="228" width="14" height="8" transform="rotate(35 404 228)" fill-opacity="0.20"/><rect x="564" y="228" width="14" height="8" transform="rotate(35 564 228)" fill-opacity="0.25"/><rect x="712" y="228" width="15" height="11" transform="rotate(35 712 228)" fill-opacity="0.33"/><rect x="752" y="228" width="12" height="12" transform="rotate(35 752 228)" fill-opacity="0.44"/><rect x="756" y="228" width="11" height="9" transform="rotate(35 756 228)" fill-opacity="0.24"/><rect x="848" y="228" width="10" height="7" transform="rotate(35 848 228)" fill-opacity="0.45"/><rect x="8" y="232" width="8" height="11" transform="rotate(35 8 232)" fill-opacity="0.19"/><rect x="184" y="232" width="9" height="8" transform="rotate(35 184 232)" fill-opacity="0.28"/><rect x="196" y="232" width="12" height="9" transform="rotate(35 196 232)" fill-opacity="0.25"/><rect x="260" y="232" width="11" height="10" transform="rotate(35 260 232)" fill-opacity="0.27"/><rect x="272" y="232" width="15" height="7" transform="rotate(35 272 232)" fill-opacity="0.42"/><rect x="304" y="232" width="16" height="9" transform="rotate(35 304 232)" fill-opacity="0.39"/><rect x="356" y="232" width="13" height="6" transform="rotate(35 356 232)" fill-opacity="0.40"/><rect x="440" y="232" width="16" height="11" transform="rotate(35 440 232)" fill-opacity="0.41"/><rect x="472" y="232" width="16" height="7" transform="rotate(35 472 232)" fill-opacity="0.43"/><rect x="492" y="232" width="15" height="12" transform="rotate(35 492 232)" fill-opacity="0.43"/><rect x="496" y="232" width="16" height="9" transform="rotate(35 496 232)" fill-opacity="0.43"/><rect x="532" y="232" width="15" height="11" transform="rotate(35 532 232)" fill-opacity="0.27"/><rect x="560" y="232" width="14" height="12" transform="rotate(35 560 232)" fill-opacity="0.31"/><rect x="600" y="232" width="11" height="6" transform="rotate(35 600 232)" fill-opacity="0.20"/><rect x="780" y="232" width="15" height="13" transform="rotate(35 780 232)" fill-opacity="0.25"/><rect x="856" y="232" width="15" height="13" transform="rotate(35 856 232)" fill-opacity="0.45"/><rect x="12" y="236" width="11" height="8" transform="rotate(35 12 236)" fill-opacity="0.32"/><rect x="64" y="236" width="16" height="10" transform="rotate(35 64 236)" fill-opacity="0.33"/><rect x="128" y="236" width="8" height="13" transform="rotate(35 128 236)" fill-opacity="0.20"/><rect x="212" y="236" width="16" height="8" transform="rotate(35 212 236)" fill-opacity="0.23"/><rect x="228" y="236" width="12" height="9" transform="rotate(35 228 236)" fill-opacity="0.36"/><rect x="300" y="236" width="8" height="9" transform="rotate(35 300 236)" fill-opacity="0.42"/><rect x="344" y="236" width="12" height="13" transform="rotate(35 344 236)" fill-opacity="0.20"/><rect x="392" y="236" width="15" height="9" transform="rotate(35 392 236)" fill-opacity="0.41"/><rect x="436" y="236" width="14" height="9" transform="rotate(35 436 236)" fill-opacity="0.41"/><rect x="716" y="236" width="14" height="6" transform="rotate(35 716 236)" fill-opacity="0.29"/><rect x="804" y="236" width="9" height="9" transform="rotate(35 804 236)" fill-opacity="0.19"/><rect x="96" y="240" width="11" height="7" transform="rotate(35 96 240)" fill-opacity="0.28"/><rect x="180" y="240" width="12" height="13" transform="rotate(35 180 240)" fill-opacity="0.19"/><rect x="256" y="240" width="17" height="10" transform="rotate(35 256 240)" fill-opacity="0.42"/><rect x="480" y="240" width="13" height="7" transform="rotate(35 480 240)" fill-opacity="0.29"/><rect x="536" y="240" width="12" height="9" transform="rotate(35 536 240)" fill-opacity="0.34"/><rect x="616" y="240" width="14" height="7" transform="rotate(35 616 240)" fill-opacity="0.19"/><rect x="668" y="240" width="16" height="7" transform="rotate(35 668 240)" fill-opacity="0.37"/><rect x="736" y="240" width="12" height="6" transform="rotate(35 736 240)" fill-opacity="0.34"/><rect x="780" y="240" width="7" height="10" transform="rotate(35 780 240)" fill-opacity="0.28"/><rect x="836" y="240" width="7" height="9" transform="rotate(35 836 240)" fill-opacity="0.21"/><rect x="844" y="240" width="15" height="8" transform="rotate(35 844 240)" fill-opacity="0.37"/><rect x="24" y="244" width="12" height="8" transform="rotate(35 24 244)" fill-opacity="0.35"/><rect x="36" y="244" width="10" height="7" transform="rotate(35 36 244)" fill-opacity="0.26"/><rect x="52" y="244" width="15" height="7" transform="rotate(35 52 244)" fill-opacity="0.20"/><rect x="116" y="244" width="7" height="12" transform="rotate(35 116 244)" fill-opacity="0.18"/><rect x="180" y="244" width="13" height="10" transform="rotate(35 180 244)" fill-opacity="0.35"/><rect x="232" y="244" width="12" height="9" transform="rotate(35 232 244)" fill-opacity="0.35"/><rect x="272" y="244" width="14" height="13" transform="rotate(35 272 244)" fill-opacity="0.26"/><rect x="288" y="244" width="12" height="8" transform="rotate(35 288 244)" fill-opacity="0.34"/><rect x="348" y="244" width="14" height="6" transform="rotate(35 348 244)" fill-opacity="0.38"/><rect x="560" y="244" width="15" height="6" transform="rotate(35 560 244)" fill-opacity="0.43"/><rect x="564" y="244" width="15" height="9" transform="rotate(35 564 244)" fill-opacity="0.34"/><rect x="572" y="244" width="9" height="10" transform="rotate(35 572 244)" fill-opacity="0.33"/><rect x="620" y="244" width="17" height="12" transform="rotate(35 620 244)" fill-opacity="0.44"/><rect x="644" y="244" width="16" height="8" transform="rotate(35 644 244)" fill-opacity="0.28"/><rect x="656" y="244" width="9" height="10" transform="rotate(35 656 244)" fill-opacity="0.43"/><rect x="712" y="244" width="14" height="11" transform="rotate(35 712 244)" fill-opacity="0.43"/><rect x="760" y="244" width="9" height="10" transform="rotate(35 760 244)" fill-opacity="0.19"/><rect x="848" y="244" width="12" height="9" transform="rotate(35 848 244)" fill-opacity="0.39"/><rect x="852" y="244" width="11" height="7" transform="rotate(35 852 244)" fill-opacity="0.36"/><rect x="-4" y="248" width="11" height="8" transform="rotate(35 -4 248)" fill-opacity="0.35"/><rect x="112" y="248" width="9" height="12" transform="rotate(35 112 248)" fill-opacity="0.23"/><rect x="132" y="248" width="12" height="9" transform="rotate(35 132 248)" fill-opacity="0.20"/><rect x="136" y="248" width="15" height="12" transform="rotate(35 136 248)" fill-opacity="0.38"/><rect x="324" y="248" width="16" height="7" transform="rotate(35 324 248)" fill-opacity="0.40"/><rect x="332" y="248" width="9" height="13" transform="rotate(35 332 248)" fill-opacity="0.30"/><rect x="364" y="248" width="11" height="13" transform="rotate(35 364 248)" fill-opacity="0.39"/><rect x="460" y="248" width="14" height="7" transform="rotate(35 460 248)" fill-opacity="0.45"/><rect x="520" y="248" width="13" height="12" transform="rotate(35 520 248)" fill-opacity="0.41"/><rect x="528" y="248" width="16" height="10" transform="rotate(35 528 248)" fill-opacity="0.36"/><rect x="612" y="248" width="15" height="8" transform="rotate(35 612 248)" fill-opacity="0.28"/><rect x="660" y="248" width="15" height="11" transform="rotate(35 660 248)" fill-opacity="0.28"/><rect x="780" y="248" width="9" height="9" transform="rotate(35 780 248)" fill-opacity="0.23"/><rect x="20" y="252" width="17" height="9" transform="rotate(35 20 252)" fill-opacity="0.24"/><rect x="100" y="252" width="9" height="11" transform="rotate(35 100 252)" fill-opacity="0.28"/><rect x="176" y="252" width="8" height="9" transform="rotate(35 176 252)" fill-opacity="0.36"/><rect x="256" y="252" width="14" height="8" transform="rotate(35 256 252)" fill-opacity="0.25"/><rect x="300" y="252" width="11" height="10" transform="rotate(35 300 252)" fill-opacity="0.22"/><rect x="368" y="252" width="7" height="8" transform="rotate(35 368 252)" fill-opacity="0.42"/><rect x="376" y="252" width="11" height="6" transform="rotate(35 376 252)" fill-opacity="0.35"/><rect x="496" y="252" width="16" height="13" transform="rotate(35 496 252)" fill-opacity="0.41"/><rect x="568" y="252" width="14" height="10" transform="rotate(35 568 252)" fill-opacity="0.39"/><rect x="604" y="252" width="13" height="6" transform="rotate(35 604 252)" fill-opacity="0.40"/><rect x="640" y="252" width="14" height="13" transform="rotate(35 640 252)" fill-opacity="0.26"/><rect x="648" y="252" width="15" height="8" transform="rotate(35 648 252)" fill-opacity="0.38"/><rect x="652" y="252" width="10" height="10" transform="rotate(35 652 252)" fill-opacity="0.21"/><rect x="716" y="252" width="9" height="12" transform="rotate(35 716 252)" fill-opacity="0.35"/><rect x="720" y="252" width="10" height="8" transform="rotate(35 720 252)" fill-opacity="0.36"/><rect x="-4" y="256" width="13" height="10" transform="rotate(35 -4 256)" fill-opacity="0.38"/><rect x="44" y="256" width="9" height="10" transform="rotate(35 44 256)" fill-opacity="0.35"/><rect x="116" y="256" width="17" height="10" transform="rotate(35 116 256)" fill-opacity="0.28"/><rect x="200" y="256" width="10" height="11" transform="rotate(35 200 256)" fill-opacity="0.36"/><rect x="224" y="256" width="11" height="13" transform="rotate(35 224 256)" fill-opacity="0.40"/><rect x="288" y="256" width="10" height="9" transform="rotate(35 288 256)" fill-opacity="0.28"/><rect x="324" y="256" width="13" height="8" transform="rotate(35 324 256)" fill-opacity="0.24"/><rect x="484" y="256" width="16" height="6" transform="rotate(35 484 256)" fill-opacity="0.29"/><rect x="488" y="256" width="11" height="13" transform="rotate(35 488 256)" fill-opacity="0.26"/><rect x="500" y="256" width="15" height="7" transform="rotate(35 500 256)" fill-opacity="0.19"/><rect x="512" y="256" width="13" height="11" transform="rotate(35 512 256)" fill-opacity="0.34"/><rect x="564" y="256" width="7" height="9" transform="rotate(35 564 256)" fill-opacity="0.28"/><rect x="596" y="256" width="14" height="10" transform="rotate(35 596 256)" fill-opacity="0.22"/><rect x="628" y="256" width="14" height="9" transform="rotate(35 628 256)" fill-opacity="0.30"/><rect x="632" y="256" width="9" height="6" transform="rotate(35 632 256)" fill-opacity="0.38"/><rect x="732" y="256" width="7" height="7" transform="rotate(35 732 256)" fill-opacity="0.22"/><rect x="756" y="256" width="7" height="10" transform="rotate(35 756 256)" fill-opacity="0.21"/><rect x="836" y="256" width="12" height="12" transform="rotate(35 836 256)" fill-opacity="0.32"/><rect x="0" y="260" width="16" height="8" transform="rotate(35 0 260)" fill-opacity="0.42"/><rect x="16" y="260" width="12" height="12" transform="rotate(35 16 260)" fill-opacity="0.31"/><rect x="92" y="260" width="15" height="9" transform="rotate(35 92 260)" fill-opacity="0.21"/><rect x="216" y="260" width="12" height="11" transform="rotate(35 216 260)" fill-opacity="0.37"/><rect x="232" y="260" width="17" height="9" transform="rotate(35 232 260)" fill-opacity="0.21"/><rect x="268" y="260" width="13" height="10" transform="rotate(35 268 260)" fill-opacity="0.45"/><rect x="392" y="260" width="14" height="6" transform="rotate(35 392 260)" fill-opacity="0.35"/><rect x="436" y="260" width="12" height="11" transform="rotate(35 436 260)" fill-opacity="0.26"/><rect x="484" y="260" width="16" height="11" transform="rotate(35 484 260)" fill-opacity="0.44"/><rect x="500" y="260" width="14" height="11" transform="rotate(35 500 260)" fill-opacity="0.33"/><rect x="688" y="260" width="17" height="8" transform="rotate(35 688 260)" fill-opacity="0.27"/><rect x="804" y="260" width="14" height="11" transform="rotate(35 804 260)" fill-opacity="0.41"/><rect x="828" y="260" width="7" height="8" transform="rotate(35 828 260)" fill-opacity="0.41"/><rect x="844" y="260" width="9" height="7" transform="rotate(35 844 260)" fill-opacity="0.23"/><rect x="20" y="264" width="8" height="10" transform="rotate(35 20 264)" fill-opacity="0.21"/><rect x="28" y="264" width="17" height="9" transform="rotate(35 28 264)" fill-opacity="0.22"/><rect x="60" y="264" width="8" height="10" transform="rotate(35 60 264)" fill-opacity="0.39"/><rect x="120" y="264" width="14" height="10" transform="rotate(35 120 264)" fill-opacity="0.20"/><rect x="128" y="264" width="7" height="12" transform="rotate(35 128 264)" fill-opacity="0.38"/><rect x="152" y="264" width="8" height="8" transform="rotate(35 152 264)" fill-opacity="0.28"/><rect x="156" y="264" width="15" height="12" transform="rotate(35 156 264)" fill-opacity="0.28"/><rect x="160" y="264" width="10" height="7" transform="rotate(35 160 264)" fill-opacity="0.40"/><rect x="168" y="264" width="13" height="10" transform="rotate(35 168 264)" fill-opacity="0.24"/><rect x="184" y="264" width="14" height="7" transform="rotate(35 184 264)" fill-opacity="0.39"/><rect x="236" y="264" width="8" height="9" transform="rotate(35 236 264)" fill-opacity="0.33"/><rect x="256" y="264" width="13" height="6" transform="rotate(35 256 264)" fill-opacity="0.44"/><rect x="260" y="264" width="12" height="10" transform="rotate(35 260 264)" fill-opacity="0.30"/><rect x="288" y="264" width="13" height="10" transform="rotate(35 288 264)" fill-opacity="0.24"/><rect x="320" y="264" width="11" height="11" transform="rotate(35 320 264)" fill-opacity="0.43"/><rect x="400" y="264" width="14" height="8" transform="rotate(35 400 264)" fill-opacity="0.38"/><rect x="588" y="264" width="12" height="7" transform="rotate(35 588 264)" fill-opacity="0.34"/><rect x="640" y="264" width="13" height="8" transform="rotate(35 640 264)" fill-opacity="0.40"/><rect x="712" y="264" width="9" height="9" transform="rotate(35 712 264)" fill-opacity="0.20"/><rect x="4" y="268" width="9" height="7" transform="rotate(35 4 268)" fill-opacity="0.42"/><rect x="8" y="268" width="14" height="7" transform="rotate(35 8 268)" fill-opacity="0.36"/><rect x="52" y="268" width="10" height="9" transform="rotate(35 52 268)" fill-opacity="0.36"/><rect x="132" y="268" width="11" height="12" transform="rotate(35 132 268)" fill-opacity="0.32"/><rect x="172" y="268" width="13" height="6" transform="rotate(35 172 268)" fill-opacity="0.44"/><rect x="200" y="268" width="13" height="9" transform="rotate(35 200 268)" fill-opacity="0.39"/><rect x="376" y="268" width="17" height="7" transform="rotate(35 376 268)" fill-opacity="0.33"/><rect x="384" y="268" width="11" height="13" transform="rotate(35 384 268)" fill-opacity="0.18"/><rect x="388" y="268" width="8" height="8" transform="rotate(35 388 268)" fill-opacity="0.40"/><rect x="396" y="268" width="11" height="12" transform="rotate(35 396 268)" fill-opacity="0.19"/><rect x="692" y="268" width="13" height="7" transform="rotate(35 692 268)" fill-opacity="0.42"/><rect x="760" y="268" width="14" height="13" transform="rotate(35 760 268)" fill-opacity="0.38"/><rect x="840" y="268" width="9" height="11" transform="rotate(35 840 268)" fill-opacity="0.31"/><rect x="860" y="268" width="12" height="10" transform="rotate(35 860 268)" fill-opacity="0.43"/><rect x="20" y="272" width="14" height="8" transform="rotate(35 20 272)" fill-opacity="0.35"/><rect x="24" y="272" width="12" height="12" transform="rotate(35 24 272)" fill-opacity="0.25"/><rect x="104" y="272" width="10" height="11" transform="rotate(35 104 272)" fill-opacity="0.34"/><rect x="232" y="272" width="14" height="10" transform="rotate(35 232 272)" fill-opacity="0.19"/><rect x="284" y="272" width="11" height="11" transform="rotate(35 284 272)" fill-opacity="0.20"/><rect x="340" y="272" width="13" height="12" transform="rotate(35 340 272)" fill-opacity="0.21"/><rect x="376" y="272" width="14" height="8" transform="rotate(35 376 272)" fill-opacity="0.27"/><rect x="464" y="272" width="16" height="11" transform="rotate(35 464 272)" fill-opacity="0.34"/><rect x="568" y="272" width="11" height="6" transform="rotate(35 568 272)" fill-opacity="0.29"/><rect x="620" y="272" width="13" height="9" transform="rotate(35 620 272)" fill-opacity="0.33"/><rect x="688" y="272" width="8" height="6" transform="rotate(35 688 272)" fill-opacity="0.43"/><rect x="776" y="272" width="10" height="9" transform="rotate(35 776 272)" fill-opacity="0.27"/><rect x="800" y="272" width="13" height="9" transform="rotate(35 800 272)" fill-opacity="0.41"/><rect x="824" y="272" width="10" height="11" transform="rotate(35 824 272)" fill-opacity="0.24"/><rect x="20" y="276" width="9" height="10" transform="rotate(35 20 276)" fill-opacity="0.37"/><rect x="64" y="276" width="10" height="12" transform="rotate(35 64 276)" fill-opacity="0.38"/><rect x="248" y="276" width="10" height="11" transform="rotate(35 248 276)" fill-opacity="0.38"/><rect x="284" y="276" width="15" height="9" transform="rotate(35 284 276)" fill-opacity="0.36"/><rect x="392" y="276" width="10" height="8" transform="rotate(35 392 276)" fill-opacity="0.30"/><rect x="456" y="276" width="14" height="8" transform="rotate(35 456 276)" fill-opacity="0.23"/><rect x="516" y="276" width="12" height="7" transform="rotate(35 516 276)" fill-opacity="0.37"/><rect x="552" y="276" width="15" height="10" transform="rotate(35 552 276)" fill-opacity="0.40"/><rect x="608" y="276" width="16" height="6" transform="rotate(35 608 276)" fill-opacity="0.38"/><rect x="696" y="276" width="12" height="8" transform="rotate(35 696 276)" fill-opacity="0.18"/><rect x="752" y="276" width="13" height="8" transform="rotate(35 752 276)" fill-opacity="0.30"/><rect x="820" y="276" width="13" height="9" transform="rotate(35 820 276)" fill-opacity="0.26"/><rect x="860" y="276" width="9" height="8" transform="rotate(35 860 276)" fill-opacity="0.41"/><rect x="24" y="280" width="12" height="13" transform="rotate(35 24 280)" fill-opacity="0.18"/><rect x="52" y="280" width="16" height="11" transform="rotate(35 52 280)" fill-opacity="0.43"/><rect x="72" y="280" width="11" height="9" transform="rotate(35 72 280)" fill-opacity="0.25"/><rect x="344" y="280" width="10" height="8" transform="rotate(35 344 280)" fill-opacity="0.25"/><rect x="452" y="280" width="16" height="11" transform="rotate(35 452 280)" fill-opacity="0.31"/><rect x="476" y="280" width="14" height="12" transform="rotate(35 476 280)" fill-opacity="0.32"/><rect x="528" y="280" width="15" height="9" transform="rotate(35 528 280)" fill-opacity="0.23"/><rect x="612" y="280" width="8" height="12" transform="rotate(35 612 280)" fill-opacity="0.29"/><rect x="728" y="280" width="10" height="12" transform="rotate(35 728 280)" fill-opacity="0.42"/><rect x="756" y="280" width="17" height="8" transform="rotate(35 756 280)" fill-opacity="0.23"/><rect x="792" y="280" width="12" height="10" transform="rotate(35 792 280)" fill-opacity="0.26"/><rect x="800" y="280" width="15" height="7" transform="rotate(35 800 280)" fill-opacity="0.26"/><rect x="52" y="284" width="16" height="10" transform="rotate(35 52 284)" fill-opacity="0.31"/><rect x="116" y="284" width="12" height="13" transform="rotate(35 116 284)" fill-opacity="0.37"/><rect x="168" y="284" width="8" height="7" transform="rotate(35 168 284)" fill-opacity="0.43"/><rect x="424" y="284" width="13" height="8" transform="rotate(35 424 284)" fill-opacity="0.32"/><rect x="536" y="284" width="15" height="10" transform="rotate(35 536 284)" fill-opacity="0.29"/><rect x="584" y="284" width="13" height="8" transform="rotate(35 584 284)" fill-opacity="0.34"/><rect x="736" y="284" width="10" height="13" transform="rotate(35 736 284)" fill-opacity="0.40"/><rect x="-8" y="288" width="11" height="11" transform="rotate(35 -8 288)" fill-opacity="0.43"/><rect x="12" y="288" width="13" height="11" transform="rotate(35 12 288)" fill-opacity="0.26"/><rect x="20" y="288" width="8" height="7" transform="rotate(35 20 288)" fill-opacity="0.18"/><rect x="112" y="288" width="9" height="9" transform="rotate(35 112 288)" fill-opacity="0.25"/><rect x="128" y="288" width="8" height="9" transform="rotate(35 128 288)" fill-opacity="0.29"/><rect x="172" y="288" width="14" height="8" transform="rotate(35 172 288)" fill-opacity="0.18"/><rect x="280" y="288" width="13" height="10" transform="rotate(35 280 288)" fill-opacity="0.27"/><rect x="324" y="288" width="8" height="9" transform="rotate(35 324 288)" fill-opacity="0.42"/><rect x="448" y="288" width="11" height="12" transform="rotate(35 448 288)" fill-opacity="0.25"/><rect x="480" y="288" width="11" height="9" transform="rotate(35 480 288)" fill-opacity="0.44"/><rect x="516" y="288" width="8" height="11" transform="rotate(35 516 288)" fill-opacity="0.28"/><rect x="528" y="288" width="16" height="11" transform="rotate(35 528 288)" fill-opacity="0.39"/><rect x="596" y="288" width="12" height="8" transform="rotate(35 596 288)" fill-opacity="0.36"/><rect x="680" y="288" width="13" height="11" transform="rotate(35 680 288)" fill-opacity="0.45"/><rect x="828" y="288" width="8" height="6" transform="rotate(35 828 288)" fill-opacity="0.43"/><rect x="80" y="292" width="11" height="11" transform="rotate(35 80 292)" fill-opacity="0.28"/><rect x="340" y="292" width="17" height="13" transform="rotate(35 340 292)" fill-opacity="0.41"/><rect x="344" y="292" width="8" height="11" transform="rotate(35 344 292)" fill-opacity="0.27"/><rect x="408" y="292" width="16" height="9" transform="rotate(35 408 292)" fill-opacity="0.44"/><rect x="524" y="292" width="16" height="12" transform="rotate(35 524 292)" fill-opacity="0.34"/><rect x="532" y="292" width="10" height="9" transform="rotate(35 532 292)" fill-opacity="0.30"/><rect x="548" y="292" width="10" height="10" transform="rotate(35 548 292)" fill-opacity="0.27"/><rect x="600" y="292" width="17" height="12" transform="rotate(35 600 292)" fill-opacity="0.27"/><rect x="660" y="292" width="8" height="7" transform="rotate(35 660 292)" fill-opacity="0.26"/><rect x="788" y="292" width="9" height="10" transform="rotate(35 788 292)" fill-opacity="0.30"/><rect x="108" y="296" width="10" height="13" transform="rotate(35 108 296)" fill-opacity="0.20"/><rect x="220" y="296" width="16" height="11" transform="rotate(35 220 296)" fill-opacity="0.27"/><rect x="340" y="296" width="15" height="12" transform="rotate(35 340 296)" fill-opacity="0.35"/><rect x="444" y="296" width="8" height="12" transform="rotate(35 444 296)" fill-opacity="0.33"/><rect x="484" y="296" width="9" height="9" transform="rotate(35 484 296)" fill-opacity="0.44"/><rect x="560" y="296" width="8" height="10" transform="rotate(35 560 296)" fill-opacity="0.33"/><rect x="572" y="296" width="13" height="13" transform="rotate(35 572 296)" fill-opacity="0.34"/><rect x="600" y="296" width="17" height="12" transform="rotate(35 600 296)" fill-opacity="0.20"/><rect x="636" y="296" width="17" height="10" transform="rotate(35 636 296)" fill-opacity="0.29"/><rect x="672" y="296" width="12" height="13" transform="rotate(35 672 296)" fill-opacity="0.41"/><rect x="780" y="296" width="10" height="8" transform="rotate(35 780 296)" fill-opacity="0.39"/><rect x="856" y="296" width="14" height="11" transform="rotate(35 856 296)" fill-opacity="0.43"/><rect x="188" y="300" width="15" height="6" transform="rotate(35 188 300)" fill-opacity="0.29"/><rect x="252" y="300" width="13" height="7" transform="rotate(35 252 300)" fill-opacity="0.26"/><rect x="284" y="300" width="15" height="12" transform="rotate(35 284 300)" fill-opacity="0.38"/><rect x="412" y="300" width="8" height="12" transform="rotate(35 412 300)" fill-opacity="0.33"/><rect x="468" y="300" width="12" height="9" transform="rotate(35 468 300)" fill-opacity="0.34"/><rect x="708" y="300" width="14" height="8" transform="rotate(35 708 300)" fill-opacity="0.29"/><rect x="736" y="300" width="10" height="8" transform="rotate(35 736 300)" fill-opacity="0.36"/><rect x="152" y="304" width="7" height="8" transform="rotate(35 152 304)" fill-opacity="0.22"/><rect x="172" y="304" width="9" height="6" transform="rotate(35 172 304)" fill-opacity="0.39"/><rect x="276" y="304" width="12" height="8" transform="rotate(35 276 304)" fill-opacity="0.37"/><rect x="332" y="304" width="13" height="9" transform="rotate(35 332 304)" fill-opacity="0.29"/><rect x="392" y="304" width="10" height="12" transform="rotate(35 392 304)" fill-opacity="0.45"/><rect x="416" y="304" width="17" height="9" transform="rotate(35 416 304)" fill-opacity="0.40"/><rect x="444" y="304" width="15" height="13" transform="rotate(35 444 304)" fill-opacity="0.45"/><rect x="552" y="304" width="12" height="12" transform="rotate(35 552 304)" fill-opacity="0.36"/><rect x="560" y="304" width="17" height="11" transform="rotate(35 560 304)" fill-opacity="0.43"/><rect x="764" y="304" width="16" height="12" transform="rotate(35 764 304)" fill-opacity="0.36"/><rect x="84" y="308" width="9" height="8" transform="rotate(35 84 308)" fill-opacity="0.22"/><rect x="152" y="308" width="12" height="9" transform="rotate(35 152 308)" fill-opacity="0.42"/><rect x="172" y="308" width="8" height="9" transform="rotate(35 172 308)" fill-opacity="0.44"/><rect x="220" y="308" width="15" height="12" transform="rotate(35 220 308)" fill-opacity="0.40"/><rect x="224" y="308" width="11" height="11" transform="rotate(35 224 308)" fill-opacity="0.27"/><rect x="232" y="308" width="11" height="7" transform="rotate(35 232 308)" fill-opacity="0.41"/><rect x="320" y="308" width="13" height="7" transform="rotate(35 320 308)" fill-opacity="0.19"/><rect x="352" y="308" width="15" height="10" transform="rotate(35 352 308)" fill-opacity="0.40"/><rect x="376" y="308" width="16" height="8" transform="rotate(35 376 308)" fill-opacity="0.44"/><rect x="504" y="308" width="15" height="7" transform="rotate(35 504 308)" fill-opacity="0.39"/><rect x="520" y="308" width="8" height="7" transform="rotate(35 520 308)" fill-opacity="0.41"/><rect x="580" y="308" width="8" height="10" transform="rotate(35 580 308)" fill-opacity="0.32"/><rect x="584" y="308" width="13" height="11" transform="rotate(35 584 308)" fill-opacity="0.25"/><rect x="624" y="308" width="16" height="10" transform="rotate(35 624 308)" fill-opacity="0.30"/><rect x="668" y="308" width="7" height="7" transform="rotate(35 668 308)" fill-opacity="0.29"/><rect x="-8" y="312" width="15" height="10" transform="rotate(35 -8 312)" fill-opacity="0.26"/><rect x="104" y="312" width="17" height="11" transform="rotate(35 104 312)" fill-opacity="0.24"/><rect x="224" y="312" width="11" height="12" transform="rotate(35 224 312)" fill-opacity="0.45"/><rect x="320" y="312" width="17" height="6" transform="rotate(35 320 312)" fill-opacity="0.20"/><rect x="428" y="312" width="16" height="12" transform="rotate(35 428 312)" fill-opacity="0.41"/><rect x="480" y="312" width="17" height="9" transform="rotate(35 480 312)" fill-opacity="0.34"/><rect x="576" y="312" width="13" height="10" transform="rotate(35 576 312)" fill-opacity="0.27"/><rect x="584" y="312" width="11" height="9" transform="rotate(35 584 312)" fill-opacity="0.21"/><rect x="592" y="312" width="9" height="9" transform="rotate(35 592 312)" fill-opacity="0.25"/><rect x="748" y="312" width="9" height="12" transform="rotate(35 748 312)" fill-opacity="0.24"/><rect x="768" y="312" width="9" height="9" transform="rotate(35 768 312)" fill-opacity="0.31"/><rect x="788" y="312" width="17" height="9" transform="rotate(35 788 312)" fill-opacity="0.44"/><rect x="148" y="316" width="9" height="8" transform="rotate(35 148 316)" fill-opacity="0.23"/><rect x="164" y="316" width="10" height="7" transform="rotate(35 164 316)" fill-opacity="0.29"/><rect x="212" y="316" width="8" height="7" transform="rotate(35 212 316)" fill-opacity="0.26"/><rect x="244" y="316" width="10" height="9" transform="rotate(35 244 316)" fill-opacity="0.37"/><rect x="256" y="316" width="11" height="11" transform="rotate(35 256 316)" fill-opacity="0.37"/><rect x="324" y="316" width="13" height="12" transform="rotate(35 324 316)" fill-opacity="0.30"/><rect x="356" y="316" width="13" height="8" transform="rotate(35 356 316)" fill-opacity="0.23"/><rect x="364" y="316" width="10" height="10" transform="rotate(35 364 316)" fill-opacity="0.38"/><rect x="432" y="316" width="15" height="13" transform="rotate(35 432 316)" fill-opacity="0.34"/><rect x="576" y="316" width="9" height="7" transform="rotate(35 576 316)" fill-opacity="0.33"/><rect x="644" y="316" width="9" height="8" transform="rotate(35 644 316)" fill-opacity="0.24"/><rect x="656" y="316" width="9" height="7" transform="rotate(35 656 316)" fill-opacity="0.36"/><rect x="664" y="316" width="11" height="7" transform="rotate(35 664 316)" fill-opacity="0.35"/><rect x="708" y="316" width="12" height="10" transform="rotate(35 708 316)" fill-opacity="0.21"/><rect x="716" y="316" width="15" height="8" transform="rotate(35 716 316)" fill-opacity="0.36"/><rect x="744" y="316" width="14" height="10" transform="rotate(35 744 316)" fill-opacity="0.18"/><rect x="796" y="316" width="7" height="11" transform="rotate(35 796 316)" fill-opacity="0.32"/><rect x="164" y="320" width="14" height="13" transform="rotate(35 164 320)" fill-opacity="0.40"/><rect x="204" y="320" width="13" height="7" transform="rotate(35 204 320)" fill-opacity="0.31"/><rect x="228" y="320" width="17" height="12" transform="rotate(35 228 320)" fill-opacity="0.22"/><rect x="260" y="320" width="8" height="11" transform="rotate(35 260 320)" fill-opacity="0.42"/><rect x="288" y="320" width="9" height="8" transform="rotate(35 288 320)" fill-opacity="0.35"/><rect x="492" y="320" width="8" height="10" transform="rotate(35 492 320)" fill-opacity="0.30"/><rect x="640" y="320" width="15" height="7" transform="rotate(35 640 320)" fill-opacity="0.44"/><rect x="772" y="320" width="14" height="10" transform="rotate(35 772 320)" fill-opacity="0.45"/><rect x="40" y="324" width="15" height="9" transform="rotate(35 40 324)" fill-opacity="0.20"/><rect x="80" y="324" width="13" height="6" transform="rotate(35 80 324)" fill-opacity="0.21"/><rect x="172" y="324" width="13" height="13" transform="rotate(35 172 324)" fill-opacity="0.24"/><rect x="212" y="324" width="9" height="8" transform="rotate(35 212 324)" fill-opacity="0.43"/><rect x="248" y="324" width="15" height="11" transform="rotate(35 248 324)" fill-opacity="0.36"/><rect x="260" y="324" width="16" height="12" transform="rotate(35 260 324)" fill-opacity="0.24"/><rect x="464" y="324" width="15" height="12" transform="rotate(35 464 324)" fill-opacity="0.45"/><rect x="520" y="324" width="8" height="11" transform="rotate(35 520 324)" fill-opacity="0.45"/><rect x="536" y="324" width="13" height="12" transform="rotate(35 536 324)" fill-opacity="0.37"/><rect x="540" y="324" width="8" height="7" transform="rotate(35 540 324)" fill-opacity="0.33"/><rect x="656" y="324" width="11" height="13" transform="rotate(35 656 324)" fill-opacity="0.43"/><rect x="688" y="324" width="11" height="9" transform="rotate(35 688 324)" fill-opacity="0.19"/><rect x="-8" y="328" width="8" height="8" transform="rotate(35 -8 328)" fill-opacity="0.27"/><rect x="52" y="328" width="12" height="8" transform="rotate(35 52 328)" fill-opacity="0.32"/><rect x="80" y="328" width="10" height="10" transform="rotate(35 80 328)" fill-opacity="0.34"/><rect x="100" y="328" width="17" height="10" transform="rotate(35 100 328)" fill-opacity="0.41"/><rect x="124" y="328" width="9" height="12" transform="rotate(35 124 328)" fill-opacity="0.38"/><rect x="196" y="328" width="11" height="8" transform="rotate(35 196 328)" fill-opacity="0.44"/><rect x="280" y="328" width="16" height="8" transform="rotate(35 280 328)" fill-opacity="0.43"/><rect x="348" y="328" width="7" height="8" transform="rotate(35 348 328)" fill-opacity="0.28"/><rect x="396" y="328" width="12" height="12" transform="rotate(35 396 328)" fill-opacity="0.29"/><rect x="572" y="328" width="7" height="10" transform="rotate(35 572 328)" fill-opacity="0.24"/><rect x="608" y="328" width="13" height="9" transform="rotate(35 608 328)" fill-opacity="0.38"/><rect x="676" y="328" width="11" height="9" transform="rotate(35 676 328)" fill-opacity="0.40"/><rect x="688" y="328" width="12" height="13" transform="rotate(35 688 328)" fill-opacity="0.36"/><rect x="740" y="328" width="11" height="12" transform="rotate(35 740 328)" fill-opacity="0.24"/><rect x="800" y="328" width="13" height="10" transform="rotate(35 800 328)" fill-opacity="0.36"/><rect x="24" y="332" width="9" height="13" transform="rotate(35 24 332)" fill-opacity="0.43"/><rect x="100" y="332" width="14" height="12" transform="rotate(35 100 332)" fill-opacity="0.21"/><rect x="108" y="332" width="15" height="11" transform="rotate(35 108 332)" fill-opacity="0.39"/><rect x="264" y="332" width="8" height="12" transform="rotate(35 264 332)" fill-opacity="0.30"/><rect x="384" y="332" width="16" height="10" transform="rotate(35 384 332)" fill-opacity="0.30"/><rect x="488" y="332" width="10" height="7" transform="rotate(35 488 332)" fill-opacity="0.34"/><rect x="496" y="332" width="10" height="9" transform="rotate(35 496 332)" fill-opacity="0.37"/><rect x="548" y="332" width="12" height="7" transform="rotate(35 548 332)" fill-opacity="0.39"/><rect x="580" y="332" width="7" height="9" transform="rotate(35 580 332)" fill-opacity="0.31"/><rect x="664" y="332" width="16" height="10" transform="rotate(35 664 332)" fill-opacity="0.40"/><rect x="732" y="332" width="10" height="13" transform="rotate(35 732 332)" fill-opacity="0.31"/><rect x="744" y="332" width="17" height="11" transform="rotate(35 744 332)" fill-opacity="0.40"/><rect x="68" y="336" width="14" height="7" transform="rotate(35 68 336)" fill-opacity="0.21"/><rect x="72" y="336" width="9" height="7" transform="rotate(35 72 336)" fill-opacity="0.25"/><rect x="120" y="336" width="10" height="9" transform="rotate(35 120 336)" fill-opacity="0.43"/><rect x="180" y="336" width="11" height="12" transform="rotate(35 180 336)" fill-opacity="0.26"/><rect x="184" y="336" width="16" height="11" transform="rotate(35 184 336)" fill-opacity="0.34"/><rect x="188" y="336" width="10" height="11" transform="rotate(35 188 336)" fill-opacity="0.25"/><rect x="208" y="336" width="8" height="11" transform="rotate(35 208 336)" fill-opacity="0.34"/><rect x="308" y="336" width="8" height="10" transform="rotate(35 308 336)" fill-opacity="0.29"/><rect x="352" y="336" width="8" height="8" transform="rotate(35 352 336)" fill-opacity="0.36"/><rect x="528" y="336" width="9" height="8" transform="rotate(35 528 336)" fill-opacity="0.41"/><rect x="580" y="336" width="12" height="8" transform="rotate(35 580 336)" fill-opacity="0.21"/><rect x="668" y="336" width="7" height="8" transform="rotate(35 668 336)" fill-opacity="0.34"/><rect x="816" y="336" width="14" height="8" transform="rotate(35 816 336)" fill-opacity="0.43"/><rect x="32" y="340" width="15" height="8" transform="rotate(35 32 340)" fill-opacity="0.20"/><rect x="44" y="340" width="10" height="12" transform="rotate(35 44 340)" fill-opacity="0.38"/><rect x="80" y="340" width="15" height="11" transform="rotate(35 80 340)" fill-opacity="0.40"/><rect x="84" y="340" width="13" height="8" transform="rotate(35 84 340)" fill-opacity="0.24"/><rect x="116" y="340" width="8" height="10" transform="rotate(35 116 340)" fill-opacity="0.32"/><rect x="192" y="340" width="11" height="8" transform="rotate(35 192 340)" fill-opacity="0.30"/><rect x="200" y="340" width="16" height="10" transform="rotate(35 200 340)" fill-opacity="0.22"/><rect x="216" y="340" width="13" height="8" transform="rotate(35 216 340)" fill-opacity="0.24"/><rect x="232" y="340" width="9" height="7" transform="rotate(35 232 340)" fill-opacity="0.19"/><rect x="348" y="340" width="8" height="13" transform="rotate(35 348 340)" fill-opacity="0.23"/><rect x="396" y="340" width="16" height="6" transform="rotate(35 396 340)" fill-opacity="0.22"/><rect x="564" y="340" width="14" height="9" transform="rotate(35 564 340)" fill-opacity="0.33"/><rect x="568" y="340" width="12" height="7" transform="rotate(35 568 340)" fill-opacity="0.35"/><rect x="584" y="340" width="15" height="10" transform="rotate(35 584 340)" fill-opacity="0.38"/><rect x="600" y="340" width="12" height="13" transform="rotate(35 600 340)" fill-opacity="0.22"/><rect x="664" y="340" width="14" height="12" transform="rotate(35 664 340)" fill-opacity="0.35"/><rect x="700" y="340" width="10" height="11" transform="rotate(35 700 340)" fill-opacity="0.22"/><rect x="796" y="340" width="13" height="8" transform="rotate(35 796 340)" fill-opacity="0.36"/><rect x="804" y="340" width="16" height="8" transform="rotate(35 804 340)" fill-opacity="0.43"/><rect x="832" y="340" width="9" height="9" transform="rotate(35 832 340)" fill-opacity="0.19"/><rect x="16" y="344" width="13" height="8" transform="rotate(35 16 344)" fill-opacity="0.36"/><rect x="96" y="344" width="9" height="11" transform="rotate(35 96 344)" fill-opacity="0.26"/><rect x="136" y="344" width="16" height="10" transform="rotate(35 136 344)" fill-opacity="0.37"/><rect x="152" y="344" width="13" height="7" transform="rotate(35 152 344)" fill-opacity="0.45"/><rect x="172" y="344" width="11" height="13" transform="rotate(35 172 344)" fill-opacity="0.36"/><rect x="236" y="344" width="12" height="9" transform="rotate(35 236 344)" fill-opacity="0.35"/><rect x="352" y="344" width="12" height="9" transform="rotate(35 352 344)" fill-opacity="0.31"/><rect x="412" y="344" width="8" height="11" transform="rotate(35 412 344)" fill-opacity="0.19"/><rect x="456" y="344" width="16" height="12" transform="rotate(35 456 344)" fill-opacity="0.20"/><rect x="628" y="344" width="16" height="7" transform="rotate(35 628 344)" fill-opacity="0.29"/><rect x="680" y="344" width="11" height="13" transform="rotate(35 680 344)" fill-opacity="0.30"/><rect x="740" y="344" width="13" height="12" transform="rotate(35 740 344)" fill-opacity="0.37"/><rect x="808" y="344" width="17" height="8" transform="rotate(35 808 344)" fill-opacity="0.34"/><rect x="376" y="348" width="12" height="13" transform="rotate(35 376 348)" fill-opacity="0.19"/><rect x="460" y="348" width="14" height="9" transform="rotate(35 460 348)" fill-opacity="0.18"/><rect x="496" y="348" width="13" height="7" transform="rotate(35 496 348)" fill-opacity="0.29"/><rect x="572" y="348" width="12" height="12" transform="rotate(35 572 348)" fill-opacity="0.30"/><rect x="624" y="348" width="14" height="9" transform="rotate(35 624 348)" fill-opacity="0.37"/><rect x="640" y="348" width="14" height="7" transform="rotate(35 640 348)" fill-opacity="0.38"/><rect x="672" y="348" width="8" height="12" transform="rotate(35 672 348)" fill-opacity="0.36"/><rect x="700" y="348" width="15" height="8" transform="rotate(35 700 348)" fill-opacity="0.31"/><rect x="712" y="348" width="10" height="8" transform="rotate(35 712 348)" fill-opacity="0.21"/><rect x="772" y="348" width="10" height="7" transform="rotate(35 772 348)" fill-opacity="0.38"/><rect x="0" y="352" width="12" height="10" transform="rotate(35 0 352)" fill-opacity="0.30"/><rect x="68" y="352" width="10" height="7" transform="rotate(35 68 352)" fill-opacity="0.20"/><rect x="316" y="352" width="9" height="11" transform="rotate(35 316 352)" fill-opacity="0.23"/><rect x="388" y="352" width="7" height="10" transform="rotate(35 388 352)" fill-opacity="0.45"/><rect x="544" y="352" width="16" height="11" transform="rotate(35 544 352)" fill-opacity="0.31"/><rect x="560" y="352" width="10" height="12" transform="rotate(35 560 352)" fill-opacity="0.32"/><rect x="592" y="352" width="16" height="10" transform="rotate(35 592 352)" fill-opacity="0.41"/><rect x="596" y="352" width="15" height="9" transform="rotate(35 596 352)" fill-opacity="0.36"/><rect x="628" y="352" width="10" height="9" transform="rotate(35 628 352)" fill-opacity="0.21"/><rect x="688" y="352" width="16" height="12" transform="rotate(35 688 352)" fill-opacity="0.33"/><rect x="788" y="352" width="12" height="11" transform="rotate(35 788 352)" fill-opacity="0.30"/><rect x="64" y="356" width="8" height="7" transform="rotate(35 64 356)" fill-opacity="0.18"/><rect x="72" y="356" width="12" height="8" transform="rotate(35 72 356)" fill-opacity="0.30"/><rect x="80" y="356" width="8" height="7" transform="rotate(35 80 356)" fill-opacity="0.42"/><rect x="88" y="356" width="15" height="8" transform="rotate(35 88 356)" fill-opacity="0.21"/><rect x="168" y="356" width="15" height="9" transform="rotate(35 168 356)" fill-opacity="0.29"/><rect x="232" y="356" width="14" height="10" transform="rotate(35 232 356)" fill-opacity="0.25"/><rect x="276" y="356" width="11" height="7" transform="rotate(35 276 356)" fill-opacity="0.19"/><rect x="508" y="356" width="12" height="10" transform="rotate(35 508 356)" fill-opacity="0.38"/><rect x="540" y="356" width="10" height="7" transform="rotate(35 540 356)" fill-opacity="0.36"/><rect x="744" y="356" width="13" height="7" transform="rotate(35 744 356)" fill-opacity="0.24"/><rect x="752" y="356" width="16" height="8" transform="rotate(35 752 356)" fill-opacity="0.25"/><rect x="760" y="356" width="7" height="9" transform="rotate(35 760 356)" fill-opacity="0.45"/><rect x="96" y="360" width="8" height="7" transform="rotate(35 96 360)" fill-opacity="0.44"/><rect x="100" y="360" width="9" height="8" transform="rotate(35 100 360)" fill-opacity="0.18"/><rect x="108" y="360" width="7" height="7" transform="rotate(35 108 360)" fill-opacity="0.36"/><rect x="156" y="360" width="14" height="8" transform="rotate(35 156 360)" fill-opacity="0.38"/><rect x="208" y="360" width="17" height="6" transform="rotate(35 208 360)" fill-opacity="0.22"/><rect x="340" y="360" width="16" height="11" transform="rotate(35 340 360)" fill-opacity="0.23"/><rect x="500" y="360" width="10" height="9" transform="rotate(35 500 360)" fill-opacity="0.34"/><rect x="592" y="360" width="17" height="11" transform="rotate(35 592 360)" fill-opacity="0.23"/><rect x="632" y="360" width="10" height="9" transform="rotate(35 632 360)" fill-opacity="0.29"/><rect x="704" y="360" width="13" height="8" transform="rotate(35 704 360)" fill-opacity="0.27"/><rect x="716" y="360" width="14" height="9" transform="rotate(35 716 360)" fill-opacity="0.45"/><rect x="768" y="360" width="8" height="8" transform="rotate(35 768 360)" fill-opacity="0.41"/><rect x="40" y="364" width="14" height="11" transform="rotate(35 40 364)" fill-opacity="0.23"/><rect x="116" y="364" width="11" height="9" transform="rotate(35 116 364)" fill-opacity="0.22"/><rect x="212" y="364" width="12" height="10" transform="rotate(35 212 364)" fill-opacity="0.45"/><rect x="260" y="364" width="15" height="12" transform="rotate(35 260 364)" fill-opacity="0.20"/><rect x="424" y="364" width="17" height="8" transform="rotate(35 424 364)" fill-opacity="0.42"/><rect x="432" y="364" width="15" height="12" transform="rotate(35 432 364)" fill-opacity="0.19"/><rect x="500" y="364" width="10" height="11" transform="rotate(35 500 364)" fill-opacity="0.37"/><rect x="520" y="364" width="16" height="6" transform="rotate(35 520 364)" fill-opacity="0.18"/><rect x="672" y="364" width="11" height="10" transform="rotate(35 672 364)" fill-opacity="0.43"/><rect x="700" y="364" width="16" height="9" transform="rotate(35 700 364)" fill-opacity="0.37"/><rect x="708" y="364" width="15" height="8" transform="rotate(35 708 364)" fill-opacity="0.35"/><rect x="752" y="364" width="16" height="9" transform="rotate(35 752 364)" fill-opacity="0.31"/><rect x="88" y="368" width="17" height="7" transform="rotate(35 88 368)" fill-opacity="0.22"/><rect x="268" y="368" width="14" height="8" transform="rotate(35 268 368)" fill-opacity="0.22"/><rect x="284" y="368" width="12" height="11" transform="rotate(35 284 368)" fill-opacity="0.43"/><rect x="316" y="368" width="8" height="12" transform="rotate(35 316 368)" fill-opacity="0.20"/><rect x="432" y="368" width="12" height="11" transform="rotate(35 432 368)" fill-opacity="0.44"/><rect x="576" y="368" width="12" height="7" transform="rotate(35 576 368)" fill-opacity="0.25"/><rect x="600" y="368" width="8" height="9" transform="rotate(35 600 368)" fill-opacity="0.18"/><rect x="672" y="368" width="7" height="12" transform="rotate(35 672 368)" fill-opacity="0.29"/><rect x="724" y="368" width="10" height="11" transform="rotate(35 724 368)" fill-opacity="0.41"/><rect x="836" y="368" width="15" height="7" transform="rotate(35 836 368)" fill-opacity="0.35"/><rect x="8" y="372" width="13" height="8" transform="rotate(35 8 372)" fill-opacity="0.33"/><rect x="20" y="372" width="15" height="10" transform="rotate(35 20 372)" fill-opacity="0.27"/><rect x="44" y="372" width="7" height="8" transform="rotate(35 44 372)" fill-opacity="0.35"/><rect x="92" y="372" width="11" height="8" transform="rotate(35 92 372)" fill-opacity="0.33"/><rect x="100" y="372" width="7" height="11" transform="rotate(35 100 372)" fill-opacity="0.36"/><rect x="276" y="372" width="15" height="12" transform="rotate(35 276 372)" fill-opacity="0.41"/><rect x="372" y="372" width="12" height="12" transform="rotate(35 372 372)" fill-opacity="0.41"/><rect x="512" y="372" width="14" height="9" transform="rotate(35 512 372)" fill-opacity="0.22"/><rect x="604" y="372" width="16" height="13" transform="rotate(35 604 372)" fill-opacity="0.37"/><rect x="688" y="372" width="16" height="7" transform="rotate(35 688 372)" fill-opacity="0.20"/><rect x="724" y="372" width="15" height="8" transform="rotate(35 724 372)" fill-opacity="0.28"/><rect x="796" y="372" width="12" height="8" transform="rotate(35 796 372)" fill-opacity="0.26"/><rect x="0" y="376" width="16" height="11" transform="rotate(35 0 376)" fill-opacity="0.34"/><rect x="4" y="376" width="17" height="8" transform="rotate(35 4 376)" fill-opacity="0.33"/><rect x="188" y="376" width="17" height="9" transform="rotate(35 188 376)" fill-opacity="0.42"/><rect x="284" y="376" width="8" height="8" transform="rotate(35 284 376)" fill-opacity="0.23"/><rect x="392" y="376" width="7" height="13" transform="rotate(35 392 376)" fill-opacity="0.28"/><rect x="408" y="376" width="14" height="7" transform="rotate(35 408 376)" fill-opacity="0.35"/><rect x="484" y="376" width="17" height="12" transform="rotate(35 484 376)" fill-opacity="0.26"/><rect x="548" y="376" width="9" height="12" transform="rotate(35 548 376)" fill-opacity="0.24"/><rect x="552" y="376" width="14" height="11" transform="rotate(35 552 376)" fill-opacity="0.22"/><rect x="576" y="376" width="13" height="10" transform="rotate(35 576 376)" fill-opacity="0.41"/><rect x="688" y="376" width="10" height="9" transform="rotate(35 688 376)" fill-opacity="0.28"/><rect x="792" y="376" width="14" height="12" transform="rotate(35 792 376)" fill-opacity="0.37"/><rect x="796" y="376" width="11" height="13" transform="rotate(35 796 376)" fill-opacity="0.36"/><rect x="-4" y="380" width="15" height="7" transform="rotate(35 -4 380)" fill-opacity="0.31"/><rect x="112" y="380" width="13" height="7" transform="rotate(35 112 380)" fill-opacity="0.41"/><rect x="136" y="380" width="13" height="13" transform="rotate(35 136 380)" fill-opacity="0.39"/><rect x="248" y="380" width="8" height="7" transform="rotate(35 248 380)" fill-opacity="0.40"/><rect x="324" y="380" width="15" height="11" transform="rotate(35 324 380)" fill-opacity="0.23"/><rect x="548" y="380" width="14" height="10" transform="rotate(35 548 380)" fill-opacity="0.22"/><rect x="708" y="380" width="15" height="12" transform="rotate(35 708 380)" fill-opacity="0.44"/><rect x="728" y="380" width="8" height="9" transform="rotate(35 728 380)" fill-opacity="0.38"/><rect x="732" y="380" width="9" height="8" transform="rotate(35 732 380)" fill-opacity="0.22"/><rect x="764" y="380" width="11" height="13" transform="rotate(35 764 380)" fill-opacity="0.45"/><rect x="780" y="380" width="8" height="13" transform="rotate(35 780 380)" fill-opacity="0.27"/><rect x="844" y="380" width="15" height="7" transform="rotate(35 844 380)" fill-opacity="0.21"/><rect x="864" y="380" width="16" height="9" transform="rotate(35 864 380)" fill-opacity="0.23"/><rect x="-8" y="384" width="15" height="12" transform="rotate(35 -8 384)" fill-opacity="0.42"/><rect x="4" y="384" width="15" height="10" transform="rotate(35 4 384)" fill-opacity="0.43"/><rect x="36" y="384" width="14" height="9" transform="rotate(35 36 384)" fill-opacity="0.29"/><rect x="100" y="384" width="13" height="7" transform="rotate(35 100 384)" fill-opacity="0.30"/><rect x="112" y="384" width="17" height="10" transform="rotate(35 112 384)" fill-opacity="0.20"/><rect x="180" y="384" width="12" height="7" transform="rotate(35 180 384)" fill-opacity="0.23"/><rect x="416" y="384" width="12" height="11" transform="rotate(35 416 384)" fill-opacity="0.41"/><rect x="464" y="384" width="11" height="7" transform="rotate(35 464 384)" fill-opacity="0.38"/><rect x="480" y="384" width="12" height="9" transform="rotate(35 480 384)" fill-opacity="0.21"/><rect x="532" y="384" width="11" height="11" transform="rotate(35 532 384)" fill-opacity="0.27"/><rect x="556" y="384" width="13" height="6" transform="rotate(35 556 384)" fill-opacity="0.34"/><rect x="664" y="384" width="14" height="7" transform="rotate(35 664 384)" fill-opacity="0.31"/><rect x="740" y="384" width="7" height="11" transform="rotate(35 740 384)" fill-opacity="0.27"/><rect x="52" y="388" width="13" height="12" transform="rotate(35 52 388)" fill-opacity="0.29"/><rect x="228" y="388" width="11" height="10" transform="rotate(35 228 388)" fill-opacity="0.37"/><rect x="252" y="388" width="9" height="13" transform="rotate(35 252 388)" fill-opacity="0.26"/><rect x="316" y="388" width="14" height="8" transform="rotate(35 316 388)" fill-opacity="0.30"/><rect x="360" y="388" width="12" height="11" transform="rotate(35 360 388)" fill-opacity="0.40"/><rect x="440" y="388" width="10" height="13" transform="rotate(35 440 388)" fill-opacity="0.35"/><rect x="444" y="388" width="13" height="7" transform="rotate(35 444 388)" fill-opacity="0.41"/><rect x="476" y="388" width="16" height="13" transform="rotate(35 476 388)" fill-opacity="0.29"/><rect x="608" y="388" width="13" height="10" transform="rotate(35 608 388)" fill-opacity="0.44"/><rect x="660" y="388" width="13" height="8" transform="rotate(35 660 388)" fill-opacity="0.29"/><rect x="692" y="388" width="16" height="11" transform="rotate(35 692 388)" fill-opacity="0.37"/><rect x="732" y="388" width="17" height="12" transform="rotate(35 732 388)" fill-opacity="0.30"/><rect x="852" y="388" width="11" height="10" transform="rotate(35 852 388)" fill-opacity="0.28"/><rect x="244" y="392" width="9" height="11" transform="rotate(35 244 392)" fill-opacity="0.36"/><rect x="264" y="392" width="13" height="12" transform="rotate(35 264 392)" fill-opacity="0.31"/><rect x="280" y="392" width="16" height="7" transform="rotate(35 280 392)" fill-opacity="0.20"/><rect x="380" y="392" width="10" height="11" transform="rotate(35 380 392)" fill-opacity="0.41"/><rect x="436" y="392" width="9" height="10" transform="rotate(35 436 392)" fill-opacity="0.24"/><rect x="472" y="392" width="12" height="9" transform="rotate(35 472 392)" fill-opacity="0.36"/><rect x="516" y="392" width="7" height="11" transform="rotate(35 516 392)" fill-opacity="0.19"/><rect x="536" y="392" width="16" height="7" transform="rotate(35 536 392)" fill-opacity="0.36"/><rect x="632" y="392" width="13" height="9" transform="rotate(35 632 392)" fill-opacity="0.30"/><rect x="708" y="392" width="14" height="13" transform="rotate(35 708 392)" fill-opacity="0.30"/><rect x="760" y="392" width="11" height="9" transform="rotate(35 760 392)" fill-opacity="0.32"/><rect x="836" y="392" width="13" height="7" transform="rotate(35 836 392)" fill-opacity="0.37"/><rect x="848" y="392" width="13" height="10" transform="rotate(35 848 392)" fill-opacity="0.19"/><rect x="856" y="392" width="7" height="8" transform="rotate(35 856 392)" fill-opacity="0.39"/><rect x="16" y="396" width="15" height="9" transform="rotate(35 16 396)" fill-opacity="0.28"/><rect x="212" y="396" width="16" height="12" transform="rotate(35 212 396)" fill-opacity="0.41"/><rect x="248" y="396" width="7" height="10" transform="rotate(35 248 396)" fill-opacity="0.31"/><rect x="416" y="396" width="8" height="10" transform="rotate(35 416 396)" fill-opacity="0.40"/><rect x="456" y="396" width="10" height="13" transform="rotate(35 456 396)" fill-opacity="0.31"/><rect x="536" y="396" width="11" height="11" transform="rotate(35 536 396)" fill-opacity="0.27"/><rect x="636" y="396" width="8" height="11" transform="rotate(35 636 396)" fill-opacity="0.32"/><rect x="696" y="396" width="15" height="11" transform="rotate(35 696 396)" fill-opacity="0.19"/><rect x="340" y="400" width="16" height="10" transform="rotate(35 340 400)" fill-opacity="0.40"/><rect x="408" y="400" width="12" height="10" transform="rotate(35 408 400)" fill-opacity="0.37"/><rect x="420" y="400" width="9" height="10" transform="rotate(35 420 400)" fill-opacity="0.34"/><rect x="456" y="400" width="12" height="7" transform="rotate(35 456 400)" fill-opacity="0.27"/><rect x="472" y="400" width="10" height="7" transform="rotate(35 472 400)" fill-opacity="0.32"/><rect x="500" y="400" width="10" height="8" transform="rotate(35 500 400)" fill-opacity="0.27"/><rect x="568" y="400" width="7" height="13" transform="rotate(35 568 400)" fill-opacity="0.35"/><rect x="580" y="400" width="17" height="7" transform="rotate(35 580 400)" fill-opacity="0.22"/><rect x="648" y="400" width="12" height="8" transform="rotate(35 648 400)" fill-opacity="0.33"/><rect x="696" y="400" width="11" height="9" transform="rotate(35 696 400)" fill-opacity="0.37"/><rect x="764" y="400" width="13" height="9" transform="rotate(35 764 400)" fill-opacity="0.40"/><rect x="336" y="404" width="17" height="7" transform="rotate(35 336 404)" fill-opacity="0.45"/><rect x="452" y="404" width="16" height="13" transform="rotate(35 452 404)" fill-opacity="0.29"/><rect x="492" y="404" width="11" height="10" transform="rotate(35 492 404)" fill-opacity="0.34"/><rect x="540" y="404" width="9" height="10" transform="rotate(35 540 404)" fill-opacity="0.44"/><rect x="600" y="404" width="7" height="8" transform="rotate(35 600 404)" fill-opacity="0.42"/><rect x="628" y="404" width="8" height="6" transform="rotate(35 628 404)" fill-opacity="0.44"/><rect x="656" y="404" width="10" height="11" transform="rotate(35 656 404)" fill-opacity="0.24"/><rect x="664" y="404" width="10" height="9" transform="rotate(35 664 404)" fill-opacity="0.24"/><rect x="724" y="404" width="11" height="7" transform="rotate(35 724 404)" fill-opacity="0.37"/><rect x="744" y="404" width="16" height="7" transform="rotate(35 744 404)" fill-opacity="0.34"/><rect x="812" y="404" width="10" height="11" transform="rotate(35 812 404)" fill-opacity="0.40"/><rect x="824" y="404" width="10" height="10" transform="rotate(35 824 404)" fill-opacity="0.37"/><rect x="844" y="404" width="9" height="11" transform="rotate(35 844 404)" fill-opacity="0.28"/><rect x="424" y="408" width="15" height="12" transform="rotate(35 424 408)" fill-opacity="0.29"/><rect x="436" y="408" width="9" height="11" transform="rotate(35 436 408)" fill-opacity="0.34"/><rect x="532" y="408" width="17" height="11" transform="rotate(35 532 408)" fill-opacity="0.41"/><rect x="604" y="408" width="8" height="8" transform="rotate(35 604 408)" fill-opacity="0.26"/><rect x="672" y="408" width="7" height="9" transform="rotate(35 672 408)" fill-opacity="0.44"/><rect x="696" y="408" width="9" height="10" transform="rotate(35 696 408)" fill-opacity="0.21"/><rect x="724" y="408" width="12" height="8" transform="rotate(35 724 408)" fill-opacity="0.25"/><rect x="740" y="408" width="9" height="8" transform="rotate(35 740 408)" fill-opacity="0.40"/><rect x="744" y="408" width="13" height="7" transform="rotate(35 744 408)" fill-opacity="0.26"/><rect x="852" y="408" width="7" height="8" transform="rotate(35 852 408)" fill-opacity="0.40"/><rect x="72" y="412" width="15" height="12" transform="rotate(35 72 412)" fill-opacity="0.38"/><rect x="244" y="412" width="16" height="11" transform="rotate(35 244 412)" fill-opacity="0.41"/><rect x="436" y="412" width="14" height="10" transform="rotate(35 436 412)" fill-opacity="0.28"/><rect x="476" y="412" width="9" height="9" transform="rotate(35 476 412)" fill-opacity="0.27"/><rect x="536" y="412" width="10" height="10" transform="rotate(35 536 412)" fill-opacity="0.42"/><rect x="592" y="412" width="10" height="7" transform="rotate(35 592 412)" fill-opacity="0.39"/><rect x="760" y="412" width="10" height="7" transform="rotate(35 760 412)" fill-opacity="0.38"/><rect x="772" y="412" width="8" height="8" transform="rotate(35 772 412)" fill-opacity="0.20"/><rect x="832" y="412" width="9" height="12" transform="rotate(35 832 412)" fill-opacity="0.28"/><rect x="304" y="416" width="13" height="8" transform="rotate(35 304 416)" fill-opacity="0.18"/><rect x="452" y="416" width="16" height="10" transform="rotate(35 452 416)" fill-opacity="0.20"/><rect x="456" y="416" width="17" height="10" transform="rotate(35 456 416)" fill-opacity="0.24"/><rect x="800" y="416" width="7" height="13" transform="rotate(35 800 416)" fill-opacity="0.18"/><rect x="856" y="416" width="16" height="9" transform="rotate(35 856 416)" fill-opacity="0.34"/><rect x="268" y="420" width="14" height="8" transform="rotate(35 268 420)" fill-opacity="0.44"/><rect x="296" y="420" width="11" height="7" transform="rotate(35 296 420)" fill-opacity="0.45"/><rect x="312" y="420" width="12" height="11" transform="rotate(35 312 420)" fill-opacity="0.42"/><rect x="320" y="420" width="14" height="12" transform="rotate(35 320 420)" fill-opacity="0.40"/><rect x="364" y="420" width="10" height="10" transform="rotate(35 364 420)" fill-opacity="0.29"/><rect x="408" y="420" width="8" height="12" transform="rotate(35 408 420)" fill-opacity="0.45"/><rect x="512" y="420" width="9" height="7" transform="rotate(35 512 420)" fill-opacity="0.38"/><rect x="760" y="420" width="17" height="11" transform="rotate(35 760 420)" fill-opacity="0.20"/><rect x="776" y="420" width="9" height="12" transform="rotate(35 776 420)" fill-opacity="0.33"/><rect x="232" y="424" width="7" height="10" transform="rotate(35 232 424)" fill-opacity="0.22"/><rect x="428" y="424" width="8" height="9" transform="rotate(35 428 424)" fill-opacity="0.41"/><rect x="496" y="424" width="15" height="13" transform="rotate(35 496 424)" fill-opacity="0.27"/><rect x="540" y="424" width="15" height="12" transform="rotate(35 540 424)" fill-opacity="0.38"/><rect x="564" y="424" width="13" height="12" transform="rotate(35 564 424)" fill-opacity="0.21"/><rect x="596" y="424" width="11" height="11" transform="rotate(35 596 424)" fill-opacity="0.43"/><rect x="748" y="424" width="7" height="12" transform="rotate(35 748 424)" fill-opacity="0.29"/><rect x="768" y="424" width="12" height="11" transform="rotate(35 768 424)" fill-opacity="0.23"/><rect x="856" y="424" width="10" height="7" transform="rotate(35 856 424)" fill-opacity="0.28"/><rect x="68" y="428" width="10" height="8" transform="rotate(35 68 428)" fill-opacity="0.40"/><rect x="252" y="428" width="12" height="7" transform="rotate(35 252 428)" fill-opacity="0.34"/><rect x="344" y="428" width="7" height="11" transform="rotate(35 344 428)" fill-opacity="0.41"/><rect x="416" y="428" width="15" height="7" transform="rotate(35 416 428)" fill-opacity="0.40"/><rect x="848" y="428" width="9" height="8" transform="rotate(35 848 428)" fill-opacity="0.28"/><rect x="372" y="432" width="12" height="11" transform="rotate(35 372 432)" fill-opacity="0.42"/><rect x="488" y="432" width="13" height="7" transform="rotate(35 488 432)" fill-opacity="0.44"/><rect x="508" y="432" width="12" height="7" transform="rotate(35 508 432)" fill-opacity="0.23"/><rect x="528" y="432" width="10" height="6" transform="rotate(35 528 432)" fill-opacity="0.21"/><rect x="532" y="432" width="10" height="11" transform="rotate(35 532 432)" fill-opacity="0.21"/><rect x="600" y="432" width="12" height="6" transform="rotate(35 600 432)" fill-opacity="0.31"/><rect x="316" y="436" width="11" height="8" transform="rotate(35 316 436)" fill-opacity="0.31"/><rect x="408" y="436" width="15" height="13" transform="rotate(35 408 436)" fill-opacity="0.28"/><rect x="420" y="436" width="9" height="9" transform="rotate(35 420 436)" fill-opacity="0.44"/><rect x="452" y="436" width="13" height="7" transform="rotate(35 452 436)" fill-opacity="0.31"/><rect x="460" y="436" width="11" height="10" transform="rotate(35 460 436)" fill-opacity="0.29"/><rect x="588" y="436" width="8" height="10" transform="rotate(35 588 436)" fill-opacity="0.23"/><rect x="848" y="436" width="15" height="6" transform="rotate(35 848 436)" fill-opacity="0.26"/><rect x="860" y="436" width="12" height="13" transform="rotate(35 860 436)" fill-opacity="0.35"/><rect x="296" y="440" width="10" height="11" transform="rotate(35 296 440)" fill-opacity="0.36"/><rect x="320" y="440" width="15" height="11" transform="rotate(35 320 440)" fill-opacity="0.38"/><rect x="324" y="440" width="10" height="11" transform="rotate(35 324 440)" fill-opacity="0.20"/><rect x="344" y="440" width="10" height="9" transform="rotate(35 344 440)" fill-opacity="0.40"/><rect x="456" y="440" width="16" height="13" transform="rotate(35 456 440)" fill-opacity="0.38"/><rect x="820" y="440" width="17" height="7" transform="rotate(35 820 440)" fill-opacity="0.19"/><rect x="292" y="444" width="9" height="13" transform="rotate(35 292 444)" fill-opacity="0.29"/><rect x="428" y="444" width="8" height="6" transform="rotate(35 428 444)" fill-opacity="0.43"/><rect x="480" y="444" width="9" height="9" transform="rotate(35 480 444)" fill-opacity="0.33"/><rect x="760" y="444" width="16" height="12" transform="rotate(35 760 444)" fill-opacity="0.25"/><rect x="768" y="444" width="10" height="11" transform="rotate(35 768 444)" fill-opacity="0.37"/><rect x="272" y="448" width="10" height="7" transform="rotate(35 272 448)" fill-opacity="0.29"/><rect x="328" y="448" width="9" height="11" transform="rotate(35 328 448)" fill-opacity="0.24"/><rect x="376" y="448" width="16" height="13" transform="rotate(35 376 448)" fill-opacity="0.39"/><rect x="472" y="448" width="14" height="11" transform="rotate(35 472 448)" fill-opacity="0.18"/><rect x="360" y="452" width="17" height="6" transform="rotate(35 360 452)" fill-opacity="0.28"/><rect x="376" y="452" width="11" height="12" transform="rotate(35 376 452)" fill-opacity="0.22"/><rect x="404" y="452" width="14" height="7" transform="rotate(35 404 452)" fill-opacity="0.38"/><rect x="428" y="452" width="17" height="7" transform="rotate(35 428 452)" fill-opacity="0.31"/><rect x="476" y="452" width="13" height="13" transform="rotate(35 476 452)" fill-opacity="0.39"/><rect x="548" y="452" width="16" height="10" transform="rotate(35 548 452)" fill-opacity="0.23"/><rect x="592" y="452" width="10" height="9" transform="rotate(35 592 452)" fill-opacity="0.43"/><rect x="600" y="452" width="16" height="7" transform="rotate(35 600 452)" fill-opacity="0.42"/><rect x="828" y="452" width="12" height="10" transform="rotate(35 828 452)" fill-opacity="0.28"/><rect x="84" y="456" width="11" height="11" transform="rotate(35 84 456)" fill-opacity="0.29"/><rect x="236" y="456" width="12" height="12" transform="rotate(35 236 456)" fill-opacity="0.35"/><rect x="296" y="456" width="15" height="11" transform="rotate(35 296 456)" fill-opacity="0.36"/><rect x="316" y="456" width="16" height="8" transform="rotate(35 316 456)" fill-opacity="0.35"/><rect x="548" y="456" width="15" height="12" transform="rotate(35 548 456)" fill-opacity="0.24"/><rect x="592" y="456" width="13" height="12" transform="rotate(35 592 456)" fill-opacity="0.31"/><rect x="736" y="456" width="14" height="12" transform="rotate(35 736 456)" fill-opacity="0.24"/><rect x="788" y="456" width="14" height="11" transform="rotate(35 788 456)" fill-opacity="0.41"/><rect x="792" y="456" width="7" height="11" transform="rotate(35 792 456)" fill-opacity="0.28"/><rect x="280" y="460" width="11" height="7" transform="rotate(35 280 460)" fill-opacity="0.44"/><rect x="412" y="460" width="15" height="13" transform="rotate(35 412 460)" fill-opacity="0.40"/><rect x="420" y="460" width="7" height="12" transform="rotate(35 420 460)" fill-opacity="0.39"/><rect x="480" y="460" width="13" height="11" transform="rotate(35 480 460)" fill-opacity="0.22"/><rect x="496" y="460" width="10" height="8" transform="rotate(35 496 460)" fill-opacity="0.28"/><rect x="556" y="460" width="12" height="9" transform="rotate(35 556 460)" fill-opacity="0.31"/><rect x="608" y="460" width="13" height="10" transform="rotate(35 608 460)" fill-opacity="0.28"/><rect x="748" y="460" width="10" height="7" transform="rotate(35 748 460)" fill-opacity="0.28"/><rect x="284" y="464" width="8" height="9" transform="rotate(35 284 464)" fill-opacity="0.30"/><rect x="324" y="464" width="16" height="8" transform="rotate(35 324 464)" fill-opacity="0.27"/><rect x="332" y="464" width="17" height="7" transform="rotate(35 332 464)" fill-opacity="0.27"/><rect x="528" y="464" width="9" height="11" transform="rotate(35 528 464)" fill-opacity="0.27"/><rect x="552" y="464" width="15" height="10" transform="rotate(35 552 464)" fill-opacity="0.32"/><rect x="672" y="464" width="8" height="11" transform="rotate(35 672 464)" fill-opacity="0.41"/><rect x="776" y="464" width="12" height="10" transform="rotate(35 776 464)" fill-opacity="0.37"/><rect x="820" y="464" width="17" height="13" transform="rotate(35 820 464)" fill-opacity="0.24"/><rect x="340" y="468" width="15" height="11" transform="rotate(35 340 468)" fill-opacity="0.31"/><rect x="360" y="468" width="17" height="13" transform="rotate(35 360 468)" fill-opacity="0.20"/><rect x="384" y="468" width="11" height="9" transform="rotate(35 384 468)" fill-opacity="0.22"/><rect x="564" y="468" width="12" height="12" transform="rotate(35 564 468)" fill-opacity="0.42"/><rect x="588" y="468" width="15" height="8" transform="rotate(35 588 468)" fill-opacity="0.30"/><rect x="612" y="468" width="9" height="13" transform="rotate(35 612 468)" fill-opacity="0.28"/><rect x="760" y="468" width="8" height="9" transform="rotate(35 760 468)" fill-opacity="0.40"/><rect x="772" y="468" width="13" height="6" transform="rotate(35 772 468)" fill-opacity="0.37"/><rect x="88" y="472" width="15" height="10" transform="rotate(35 88 472)" fill-opacity="0.34"/><rect x="256" y="472" width="15" height="12" transform="rotate(35 256 472)" fill-opacity="0.42"/><rect x="260" y="472" width="10" height="7" transform="rotate(35 260 472)" fill-opacity="0.25"/><rect x="384" y="472" width="10" height="10" transform="rotate(35 384 472)" fill-opacity="0.30"/><rect x="448" y="472" width="11" height="12" transform="rotate(35 448 472)" fill-opacity="0.41"/><rect x="452" y="472" width="17" height="8" transform="rotate(35 452 472)" fill-opacity="0.36"/><rect x="592" y="472" width="10" height="7" transform="rotate(35 592 472)" fill-opacity="0.40"/><rect x="796" y="472" width="11" height="8" transform="rotate(35 796 472)" fill-opacity="0.27"/><rect x="860" y="472" width="11" height="7" transform="rotate(35 860 472)" fill-opacity="0.30"/><rect x="20" y="476" width="11" height="11" transform="rotate(35 20 476)" fill-opacity="0.32"/><rect x="264" y="476" width="13" height="7" transform="rotate(35 264 476)" fill-opacity="0.38"/><rect x="288" y="476" width="16" height="9" transform="rotate(35 288 476)" fill-opacity="0.41"/><rect x="388" y="476" width="17" height="11" transform="rotate(35 388 476)" fill-opacity="0.23"/><rect x="472" y="476" width="14" height="11" transform="rotate(35 472 476)" fill-opacity="0.43"/><rect x="508" y="476" width="12" height="10" transform="rotate(35 508 476)" fill-opacity="0.42"/><rect x="548" y="476" width="14" height="13" transform="rotate(35 548 476)" fill-opacity="0.22"/><rect x="604" y="476" width="10" height="11" transform="rotate(35 604 476)" fill-opacity="0.45"/><rect x="756" y="476" width="12" height="12" transform="rotate(35 756 476)" fill-opacity="0.41"/><rect x="776" y="476" width="9" height="8" transform="rotate(35 776 476)" fill-opacity="0.23"/><rect x="808" y="476" width="10" height="8" transform="rotate(35 808 476)" fill-opacity="0.37"/><rect x="404" y="480" width="9" height="12" transform="rotate(35 404 480)" fill-opacity="0.39"/><rect x="436" y="480" width="8" height="9" transform="rotate(35 436 480)" fill-opacity="0.36"/><rect x="560" y="480" width="13" height="6" transform="rotate(35 560 480)" fill-opacity="0.35"/><rect x="616" y="480" width="13" height="10" transform="rotate(35 616 480)" fill-opacity="0.21"/><rect x="624" y="480" width="11" height="6" transform="rotate(35 624 480)" fill-opacity="0.33"/><rect x="728" y="480" width="13" height="12" transform="rotate(35 728 480)" fill-opacity="0.22"/><rect x="824" y="480" width="9" height="12" transform="rotate(35 824 480)" fill-opacity="0.33"/><rect x="28" y="484" width="11" height="7" transform="rotate(35 28 484)" fill-opacity="0.32"/><rect x="304" y="484" width="15" height="6" transform="rotate(35 304 484)" fill-opacity="0.43"/><rect x="320" y="484" width="13" height="10" transform="rotate(35 320 484)" fill-opacity="0.28"/><rect x="352" y="484" width="17" height="11" transform="rotate(35 352 484)" fill-opacity="0.31"/><rect x="452" y="484" width="17" height="13" transform="rotate(35 452 484)" fill-opacity="0.21"/><rect x="464" y="484" width="9" height="10" transform="rotate(35 464 484)" fill-opacity="0.34"/><rect x="516" y="484" width="14" height="11" transform="rotate(35 516 484)" fill-opacity="0.38"/><rect x="536" y="484" width="12" height="11" transform="rotate(35 536 484)" fill-opacity="0.43"/><rect x="632" y="484" width="11" height="10" transform="rotate(35 632 484)" fill-opacity="0.24"/><rect x="832" y="484" width="15" height="9" transform="rotate(35 832 484)" fill-opacity="0.24"/><rect x="852" y="484" width="14" height="8" transform="rotate(35 852 484)" fill-opacity="0.42"/><rect x="236" y="488" width="9" height="11" transform="rotate(35 236 488)" fill-opacity="0.30"/><rect x="244" y="488" width="9" height="7" transform="rotate(35 244 488)" fill-opacity="0.22"/><rect x="304" y="488" width="8" height="8" transform="rotate(35 304 488)" fill-opacity="0.34"/><rect x="320" y="488" width="13" height="11" transform="rotate(35 320 488)" fill-opacity="0.37"/><rect x="404" y="488" width="12" height="8" transform="rotate(35 404 488)" fill-opacity="0.28"/><rect x="416" y="488" width="13" height="8" transform="rotate(35 416 488)" fill-opacity="0.37"/><rect x="428" y="488" width="12" height="10" transform="rotate(35 428 488)" fill-opacity="0.24"/><rect x="564" y="488" width="17" height="9" transform="rotate(35 564 488)" fill-opacity="0.27"/><rect x="640" y="488" width="11" height="9" transform="rotate(35 640 488)" fill-opacity="0.28"/><rect x="648" y="488" width="7" height="10" transform="rotate(35 648 488)" fill-opacity="0.29"/><rect x="744" y="488" width="9" height="11" transform="rotate(35 744 488)" fill-opacity="0.44"/><rect x="836" y="488" width="7" height="10" transform="rotate(35 836 488)" fill-opacity="0.28"/><rect x="304" y="492" width="12" height="11" transform="rotate(35 304 492)" fill-opacity="0.45"/><rect x="348" y="492" width="10" height="9" transform="rotate(35 348 492)" fill-opacity="0.22"/><rect x="600" y="492" width="12" height="7" transform="rotate(35 600 492)" fill-opacity="0.30"/><rect x="700" y="492" width="15" height="8" transform="rotate(35 700 492)" fill-opacity="0.29"/><rect x="752" y="492" width="17" height="10" transform="rotate(35 752 492)" fill-opacity="0.44"/><rect x="764" y="492" width="14" height="9" transform="rotate(35 764 492)" fill-opacity="0.43"/><rect x="788" y="492" width="16" height="8" transform="rotate(35 788 492)" fill-opacity="0.31"/><rect x="852" y="492" width="9" height="8" transform="rotate(35 852 492)" fill-opacity="0.20"/><rect x="264" y="496" width="13" height="7" transform="rotate(35 264 496)" fill-opacity="0.39"/><rect x="360" y="496" width="14" height="12" transform="rotate(35 360 496)" fill-opacity="0.37"/><rect x="468" y="496" width="11" height="10" transform="rotate(35 468 496)" fill-opacity="0.21"/><rect x="500" y="496" width="14" height="8" transform="rotate(35 500 496)" fill-opacity="0.28"/><rect x="508" y="496" width="13" height="9" transform="rotate(35 508 496)" fill-opacity="0.33"/><rect x="512" y="496" width="15" height="10" transform="rotate(35 512 496)" fill-opacity="0.37"/><rect x="536" y="496" width="8" height="10" transform="rotate(35 536 496)" fill-opacity="0.23"/><rect x="552" y="496" width="8" height="11" transform="rotate(35 552 496)" fill-opacity="0.26"/><rect x="628" y="496" width="11" height="10" transform="rotate(35 628 496)" fill-opacity="0.41"/><rect x="708" y="496" width="9" height="7" transform="rotate(35 708 496)" fill-opacity="0.35"/><rect x="852" y="496" width="11" height="10" transform="rotate(35 852 496)" fill-opacity="0.44"/></g></g></svg>
<svg class="abs" style="left:0;top:0" width="858" height="492"><defs><clipPath id="nontile"><path d="M-5 -5 H863 V497 H-5 Z M-2.7 -15.7 h439.6 v31.5 h-439.6 Z M499.7 -15.7 h31.4 v31.5 h-31.4 Z M625.3 -15.7 h31.4 v31.5 h-31.4 Z M-2.7 15.8 h471.0 v31.5 h-471.0 Z M562.5 15.8 h62.8 v31.5 h-62.8 Z M-2.7 47.3 h471.0 v31.5 h-471.0 Z M499.7 47.3 h31.4 v31.5 h-31.4 Z M562.5 47.3 h31.4 v31.5 h-31.4 Z M-2.7 78.8 h502.4 v31.5 h-502.4 Z M-2.7 110.3 h251.2 v31.5 h-251.2 Z M279.9 110.3 h219.8 v31.5 h-219.8 Z M531.1 110.3 h31.4 v31.5 h-31.4 Z M-2.7 141.8 h251.2 v31.5 h-251.2 Z M499.7 141.8 h94.2 v31.5 h-94.2 Z M-2.7 173.3 h251.2 v31.5 h-251.2 Z M499.7 173.3 h125.6 v31.5 h-125.6 Z M499.7 204.8 h62.8 v31.5 h-62.8 Z M593.9 204.8 h31.4 v31.5 h-31.4 Z M248.5 236.3 h31.4 v31.5 h-31.4 Z M374.1 236.3 h31.4 v31.5 h-31.4 Z M531.1 236.3 h31.4 v31.5 h-31.4 Z M562.5 267.8 h31.4 v31.5 h-31.4 Z" clip-rule="evenodd"/></clipPath></defs><path d="M-5 -5 H863 V497 H-5 Z M-2.7 -15.7 h439.6 v31.5 h-439.6 Z M499.7 -15.7 h31.4 v31.5 h-31.4 Z M625.3 -15.7 h31.4 v31.5 h-31.4 Z M-2.7 15.8 h471.0 v31.5 h-471.0 Z M562.5 15.8 h62.8 v31.5 h-62.8 Z M-2.7 47.3 h471.0 v31.5 h-471.0 Z M499.7 47.3 h31.4 v31.5 h-31.4 Z M562.5 47.3 h31.4 v31.5 h-31.4 Z M-2.7 78.8 h502.4 v31.5 h-502.4 Z M-2.7 110.3 h251.2 v31.5 h-251.2 Z M279.9 110.3 h219.8 v31.5 h-219.8 Z M531.1 110.3 h31.4 v31.5 h-31.4 Z M-2.7 141.8 h251.2 v31.5 h-251.2 Z M499.7 141.8 h94.2 v31.5 h-94.2 Z M-2.7 173.3 h251.2 v31.5 h-251.2 Z M499.7 173.3 h125.6 v31.5 h-125.6 Z M499.7 204.8 h62.8 v31.5 h-62.8 Z M593.9 204.8 h31.4 v31.5 h-31.4 Z M248.5 236.3 h31.4 v31.5 h-31.4 Z M374.1 236.3 h31.4 v31.5 h-31.4 Z M531.1 236.3 h31.4 v31.5 h-31.4 Z M562.5 267.8 h31.4 v31.5 h-31.4 Z" fill-rule="evenodd" fill="#e8107a" fill-opacity="0.05" shape-rendering="crispEdges"/><g clip-path="url(#nontile)" fill="#ff3a9a" opacity="0.2" filter="url(#b2)"><use href="#bldg"/></g></svg>
<svg class="abs" style="left:521px;top:117px" width="20" height="28"><path d="M9.3 1 C4.3 1 0.8 4.8 0.8 9.4 C0.8 15 9.3 26.5 9.3 26.5 C9.3 26.5 17.8 15 17.8 9.4 C17.8 4.8 14.3 1 9.3 1 Z" fill="#3a8ee2"/><circle cx="9.2" cy="10.2" r="3.1" fill="#f4faff"/></svg>
<div class="abs" style="left:745px;top:7.5px;width:105px;height:31.5px;background:#fff"></div>
<div class="abs" style="left:745px;top:45px;width:105px;height:103px;background:#fff"></div>
<svg class="abs" style="left:835.0px;top:18.5px" width="7.4" height="5.2"><path d="M1 1 L3.7 4.2 L6.4 1" fill="none" stroke="#444" stroke-width="1.1"/></svg>
<svg class="abs" style="left:835.0px;top:56.0px" width="7.4" height="5.2"><path d="M1 1 L3.7 4.2 L6.4 1" fill="none" stroke="#444" stroke-width="1.1"/></svg>
<div class="t" style="left:753.7px;top:19.15px;font-size:10.3px;color:#333;font-weight:normal;">Map Types</div>
<div class="t" style="left:753.7px;top:55.75px;font-size:10.5px;color:#333;font-weight:normal;">Network Filter</div>
<div class="abs" style="left:754px;top:69.2px;width:22px;height:22px;background:#f000cf"></div>
<svg class="abs" style="left:754px;top:69.2px" width="22" height="22"><path d="M6.8 11.2 L9.6 13.8 L15.2 8.3" fill="none" stroke="#8c1a8c" stroke-width="2.2"/></svg>
<div class="t" style="left:780.4px;top:75.45px;font-size:9.7px;color:#333;font-weight:normal;">4G LTE-A</div>
<div class="abs" style="left:754px;top:93.3px;width:22px;height:22px;background:#1a91f0"></div>
<svg class="abs" style="left:754px;top:93.3px" width="22" height="22"><path d="M6.8 11.2 L9.6 13.8 L15.2 8.3" fill="none" stroke="#1a3f7a" stroke-width="2.2"/></svg>
<div class="t" style="left:780.4px;top:99.55px;font-size:9.7px;color:#333;font-weight:normal;">4G</div>
<div class="abs" style="left:754px;top:117.4px;width:22px;height:22px;background:#ccff22"></div>
<svg class="abs" style="left:754px;top:117.4px" width="22" height="22"><path d="M6.8 11.2 L9.6 13.8 L15.2 8.3" fill="none" stroke="#1a1a1a" stroke-width="2.2"/></svg>
<div class="t" style="left:780.4px;top:123.65px;font-size:9.7px;color:#333;font-weight:normal;">3G</div>
<div class="abs" style="left:829px;top:433px;width:21px;height:40.5px;background:#fff;border-radius:2px"></div>
<div class="abs" style="left:832px;top:453px;width:15px;height:1px;background:#e6e6e6"></div>
<div class="abs" style="left:835.5px;top:442.5px;width:8px;height:1.6px;background:#555"></div>
<div class="abs" style="left:838.7px;top:439.29999999999995px;width:1.6px;height:8px;background:#555"></div>
<div class="abs" style="left:835.5px;top:462.79999999999995px;width:8px;height:1.6px;background:#555"></div>
<div class="abs" style="left:520px;top:481.29999999999995px;width:338px;height:10.5px;background:rgba(255,255,255,0.72)"></div>
<div class="abs" style="left:673.4px;top:481.29999999999995px;width:1px;height:10.5px;background:#777"></div>
<div class="abs" style="left:733.5px;top:481.29999999999995px;width:1px;height:10.5px;background:#777"></div>
<div class="abs" style="left:786.2px;top:481.29999999999995px;width:1px;height:10.5px;background:#777"></div>
<div class="t" style="left:523.6px;top:483.40px;font-size:7.4px;color:#444;font-weight:normal;">Imagery ©2017 CNES / Airbus, DigitalGlobe</div>
<div class="t" style="left:678px;top:483.40px;font-size:7.4px;color:#444;font-weight:normal;">50 m</div>
<svg class="abs" style="left:697px;top:484px" width="32" height="6"><path d="M1 1 V4.5 H30 V1" fill="none" stroke="#666" stroke-width="1.4"/><path d="M1 4 H30" stroke="#fff" stroke-width="1"/></svg>
<div class="t" style="left:737.5px;top:483.40px;font-size:7.4px;color:#444;font-weight:normal;">Terms of Use</div>
<div class="t" style="left:790.6px;top:483.40px;font-size:7.4px;color:#444;font-weight:normal;">Report a map error</div>
<div class="t" style="left:708px;top:470.40px;font-size:7.2px;color:rgba(60,50,140,0.45);font-weight:normal;">Imagery ©2017 Google, <span style="color:#3a5ad8">DigitalGlobe</span></div>
<div class="abs" style="left:849px;top:415px;width:9px;height:10px;background:#e8b8e0"></div>
<div class="t" style="left:5px;top:473.00px;font-size:15.6px;color:#fbe6f8;font-weight:bold;transform:scaleX(0.86);transform-origin:0 0">Google</div></div>
<div class="panel"><svg class="abs" style="left:23px;top:27px" width="20" height="30"><path d="M9.5 0.8 C4.6 0.8 0.8 4.6 0.8 9.6 C0.8 15.5 9.5 28.5 9.5 28.5 C9.5 28.5 18.2 15.5 18.2 9.6 C18.2 4.6 14.4 0.8 9.5 0.8 Z" fill="#3b8ee0"/><circle cx="9.4" cy="9.8" r="3" fill="#fff"/></svg>
<div class="t" style="left:50px;top:31.70px;font-size:10.4px;color:#4a4a4a;font-weight:normal;">Jalan Kampung Tanjung Aru Baru 65</div>
<div class="t" style="left:50px;top:42.75px;font-size:10.3px;color:#4a4a4a;font-weight:normal;">88100 Kota Kinabalu, Malaysia</div>
<div class="abs" style="left:12.299999999999997px;top:76px;width:234px;height:1px;background:#e4e4e4"></div>
<div class="abs" style="left:12.299999999999997px;top:113px;width:234px;height:1px;background:#e4e4e4"></div>
<div class="t" style="left:23px;top:89.15px;font-size:13.3px;color:#333;font-weight:normal;">Voice &amp; Text</div>
<div class="t" style="left:23px;top:126.80px;font-size:13px;color:#333;font-weight:normal;">Data</div>
<svg class="abs" style="left:226.5px;top:91.0px" width="8.6" height="5.8"><path d="M1 1 L4.3 4.8 L7.6 1" fill="none" stroke="#444" stroke-width="1.2"/></svg>
<svg class="abs" style="left:226.5px;top:128.5px" width="8.6" height="5.8"><path d="M1 1 L4.3 4.8 L7.6 1" fill="none" stroke="#444" stroke-width="1.2"/></svg>
<div class="abs" style="left:23.30000000000001px;top:169.6px;width:18px;height:18px;border-radius:50%;border:1px solid #dcdcdc;background:#fff"></div>
<div class="abs" style="left:28px;top:174.4px;width:8.8px;height:8.8px;border-radius:50%;background:#3a8fdc"></div>
<div class="abs" style="left:104.19999999999999px;top:169.6px;width:18px;height:18px;border-radius:50%;border:1px solid #d8d8d8;background:#f2f2f2"></div>
<div class="t" style="left:49.30000000000001px;top:174.45px;font-size:10.3px;color:#5c5c5c;font-weight:normal;">Outdoor</div>
<div class="t" style="left:131.5px;top:174.45px;font-size:10.3px;color:#5c5c5c;font-weight:normal;">Indoor</div>
<div class="abs" style="left:18px;top:214px;width:30px;height:30px;border-radius:50%;border:1px solid #d6d6d6"></div>
<div class="t" style="left:25.80000000000001px;top:223.90px;font-size:11px;color:#999;font-weight:normal;">4G</div>
<div class="abs" style="left:18px;top:266.5px;width:30px;height:30px;border-radius:50%;border:1px solid #d6d6d6"></div>
<div class="t" style="left:25.80000000000001px;top:276.40px;font-size:11px;color:#999;font-weight:normal;">3G</div>
<div class="abs" style="left:18px;top:322px;width:30px;height:30px;border-radius:50%;border:1px solid #d6d6d6"></div>
<svg class="abs" style="left:25px;top:329px" width="14" height="16"><g fill="#9a9a9a"><rect x="1" y="9" width="1.6" height="6"/><rect x="4" y="7" width="1.6" height="8"/><rect x="7" y="4.5" width="1.6" height="10.5"/><rect x="10" y="1.5" width="1.6" height="13.5"/></g></svg>
<div class="t" style="left:59.599999999999994px;top:214.75px;font-size:10.5px;color:#111;font-weight:bold;">Network</div>
<div class="t" style="left:59.599999999999994px;top:230.80px;font-size:10.2px;color:#5c5c5c;font-weight:normal;">You have 4G coverage as your best</div>
<div class="t" style="left:59.599999999999994px;top:247.05px;font-size:10.3px;color:#5c5c5c;font-weight:normal;">available network.</div>
<div class="t" style="left:59.599999999999994px;top:271.30px;font-size:10.2px;color:#5c5c5c;font-weight:normal;">If you don’t have a 4G enabled device</div>
<div class="t" style="left:59.599999999999994px;top:288.03px;font-size:10.15px;color:#5c5c5c;font-weight:normal;">you will have 3G carrier coverage.</div>
<div class="t" style="left:58.80000000000001px;top:323.10px;font-size:10.4px;color:#222;font-weight:bold;">Signal strength</div>
<div class="t" style="left:58.80000000000001px;top:338.27px;font-size:10.45px;color:#5c5c5c;font-weight:normal;">Excellent signal strength</div></div>
<div class="content"><div class="t" style="left:15.299999999999997px;top:18.12px;font-size:10.35px;color:#333;font-weight:normal;">Coverage last updated 13 July 2017</div>
<div class="t" style="left:15.299999999999997px;top:45.85px;font-size:13.1px;color:#222;font-weight:normal;">Map Coverage</div>
<div class="t" style="left:15.299999999999997px;top:68.95px;font-size:10.5px;color:#333;font-weight:normal;">The map is currently showing the network coverage we offer.</div></div>
<div class="abs" style="left:0;top:620px;width:1080px;height:33px;background:linear-gradient(rgba(0,0,0,0),rgba(0,0,0,0.025) 45%,rgba(0,0,0,0.085));z-index:8"></div>
<div class="abs" style="left:972.5px;top:588px;width:52.5px;height:54px;background:#f7d700;overflow:hidden;z-index:9">
<svg class="abs" style="left:0;top:0" width="53" height="54"><g fill="#fff2a0" font-family="Liberation Sans" font-weight="bold" font-size="25" text-anchor="middle">
<text x="4" y="20.3" transform="translate(4 0) scale(0.8 1) translate(-4 0)">I</text>
<text x="17.5" y="20.3" transform="translate(17.5 0) scale(0.8 1) translate(-17.5 0)">N</text>
<text x="34.5" y="20.3" transform="translate(34.5 0) scale(0.8 1) translate(-34.5 0)">T</text>
<text x="50" y="20.3" transform="translate(50 0) scale(0.8 1) translate(-50 0)">S</text>
</g></svg>
<div class="t" style="left:-4px;top:23.5px;font-size:11px;font-weight:bold;color:#fff0a0;letter-spacing:2.9px;transform:scaleX(0.85);transform-origin:0 0">SOLVING</div>
<div class="t" style="left:-6px;top:34px;font-size:10.5px;font-weight:bold;color:#fff0a0;letter-spacing:2.4px;transform:scaleX(0.85);transform-origin:0 0">INCE 2004</div>
<svg class="abs" style="left:17px;top:20px" width="18" height="12"><path d="M3 9 L8.8 3.5 L14 8.5" fill="none" stroke="#111" stroke-width="2.3"/></svg>
</div>
</body></html>
